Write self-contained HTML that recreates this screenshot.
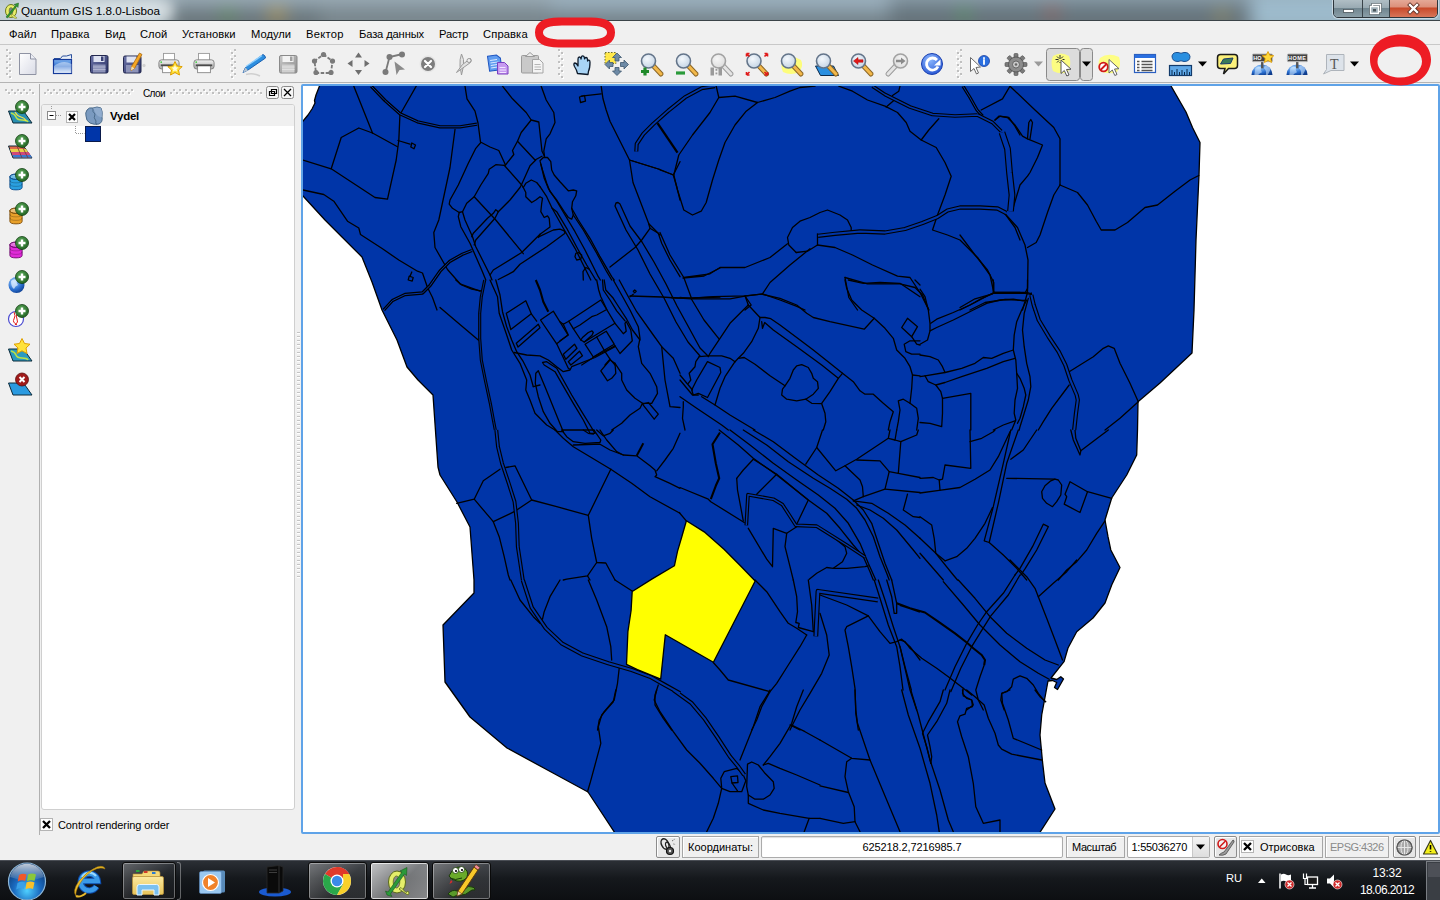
<!DOCTYPE html>
<html lang="ru">
<head>
<meta charset="utf-8">
<title>Quantum GIS 1.8.0-Lisboa</title>
<style>
*{box-sizing:border-box;margin:0;padding:0}
html,body{width:1440px;height:900px;overflow:hidden;background:#f0f0f0;font-family:"Liberation Sans",sans-serif;font-size:11px;color:#000}
.abs{position:absolute}
#titlebar{position:absolute;left:0;top:0;width:1440px;height:21px;background:linear-gradient(#8a9aa3,#74848d);border-bottom:1px solid #3b4348;overflow:hidden}
#title{position:absolute;left:21px;top:4px;font-size:11.700px;line-height:14px;color:#000;white-space:nowrap}
#menubar{position:absolute;left:0;top:21px;width:1440px;height:24px;background:#f0f0f0;border-bottom:1px solid #c8c8c8}
#menubar span{position:absolute;top:7px;font-size:11.200px;line-height:13px;white-space:nowrap}
#toolbar{position:absolute;left:0;top:45px;width:1440px;height:38px;background:#f0f0f0;border-bottom:1px solid #b4b4b4}
#lefttb{position:absolute;left:0;top:84px;width:40px;height:775px;background:#f0f0f0;border-right:1px solid #b0b0b0}
#layers{position:absolute;left:41px;top:104px;width:254px;height:706px;background:#fff;border:1px solid #cfcfcf;border-radius:3px}
#canvas{position:absolute;left:301px;top:84px;width:1139px;height:750px;background:#fff;border:2px solid #5fa3e8;border-radius:2px;overflow:hidden}
#statusbar{position:absolute;left:0;top:835px;width:1440px;height:25px;background:#f0f0f0}
.sbox{position:absolute;top:1px;height:22px;border:1px solid #a6a6a6;box-shadow:inset 1px 1px 0 #fff;background:#f0f0f0;font-size:11px;line-height:20px;white-space:nowrap}
#taskbar{position:absolute;left:0;top:860px;width:1440px;height:40px;background:linear-gradient(#2b2f35 0,#15181c 45%,#0d0f12 100%);border-top:1px solid #4a4e55;overflow:hidden}
.tbtn{position:absolute;top:1px;height:38px;border:1px solid #0a0a0a;border-radius:3px;box-shadow:inset 0 0 0 1px rgba(255,255,255,.35)}
</style>
</head>
<body>
<div id="titlebar">
  <div class="abs" style="left:-20px;top:-10px;width:1480px;height:44px;filter:blur(9px)">
    <div class="abs" style="left:0;top:0;width:215px;height:44px;background:#c3d0d6"></div>
    <div class="abs" style="left:190px;top:14px;width:150px;height:30px;background:#6b777d"></div>
    <div class="abs" style="left:190px;top:0;width:150px;height:16px;background:#9fb2bd"></div>
    <div class="abs" style="left:340px;top:10px;width:230px;height:34px;background:#7a878e"></div>
    <div class="abs" style="left:340px;top:0;width:230px;height:14px;background:#a3b6c1"></div>
    <div class="abs" style="left:570px;top:0;width:340px;height:22px;background:#9eb4c2"></div>
    <div class="abs" style="left:570px;top:20px;width:340px;height:24px;background:#74828a"></div>
    <div class="abs" style="left:910px;top:0;width:370px;height:15px;background:#8da3b0"></div>
    <div class="abs" style="left:910px;top:14px;width:370px;height:30px;background:#66737b"></div>
    <div class="abs" style="left:1270px;top:0;width:220px;height:44px;background:#9dbacb"></div>
    <div class="abs" style="left:243px;top:22px;width:10px;height:8px;background:#4f9a3a"></div>
    <div class="abs" style="left:290px;top:20px;width:14px;height:10px;background:#c89a3a"></div>
    <div class="abs" style="left:980px;top:20px;width:8px;height:10px;background:#4aa84a"></div>
    <div class="abs" style="left:1068px;top:18px;width:8px;height:10px;background:#b84a3a"></div>
    <div class="abs" style="left:1238px;top:22px;width:8px;height:8px;background:#c8a83a"></div>
  </div>
  <div class="abs" style="left:14px;top:2px;width:160px;height:17px;border-radius:8px;background:rgba(255,255,255,.35);filter:blur(5px)"></div>
  <svg class="abs" style="left:3px;top:2px" width="17" height="17" viewBox="0 0 17 17">
    <ellipse cx="8" cy="9" rx="5.5" ry="6.5" fill="#e9ee6a" stroke="#6d7a1e" stroke-width="1"/>
    <ellipse cx="8" cy="9" rx="2" ry="3.4" fill="#74848d" stroke="#6d7a1e" stroke-width=".6"/>
    <path d="M3 15 L13 3 L11 2.5 L15.5 1 L15 5.5 L14 4 L4.5 16 Z" fill="#2f9a2f" stroke="#1e5e1e" stroke-width=".5"/>
    <path d="M9 12 L14 16 L12 16.5 L8 13.5Z" fill="#e9ee6a" stroke="#6d7a1e" stroke-width=".5"/>
  </svg>
  <div id="title">Quantum GIS 1.8.0-Lisboa</div>
  <!-- window controls -->
  <div class="abs" style="left:1333px;top:-4px;width:105px;height:22px;border:1px solid #2d353b;border-radius:5px;overflow:hidden;box-shadow:0 0 0 1px rgba(255,255,255,.45)">
    <div class="abs" style="left:0;top:0;width:29px;height:21px;background:linear-gradient(#b9c6cc 0,#9aabb3 50%,#6f848e 52%,#8ea1aa 100%);border-right:1px solid #3a444a"></div>
    <div class="abs" style="left:29px;top:0;width:27px;height:21px;background:linear-gradient(#b9c6cc 0,#9aabb3 50%,#6f848e 52%,#8ea1aa 100%);border-right:1px solid #3a444a"></div>
    <div class="abs" style="left:56px;top:0;width:48px;height:21px;background:linear-gradient(#e8b4a4 0,#dc8f7a 48%,#c8492a 52%,#d97a5e 100%)"></div>
    <svg class="abs" style="left:0;top:0" width="104" height="21" viewBox="0 0 104 21">
      <rect x="9.5" y="12.5" width="10" height="3" fill="#fff" stroke="#4a555b" stroke-width=".8"/>
      <path d="M38.5 7.5h8v7h-8z M36.5 9.5h8v7h-8z" fill="none" stroke="#4a555b" stroke-width="2.6"/>
      <path d="M38.5 7.5h8v7h-8z" fill="none" stroke="#fff" stroke-width="1.4"/>
      <path d="M36.500 9.500h8v7h-8z" fill="#a0b0b8" stroke="#fff" stroke-width="1.4"/>
      <rect x="39" y="12" width="3" height="2.5" fill="#4a555b"/>
      <path d="M76 8l7 7M83 8l-7 7" stroke="#5a2a20" stroke-width="4" stroke-linecap="square"/>
      <path d="M76 8l7 7M83 8l-7 7" stroke="#fff" stroke-width="2.400" stroke-linecap="square"/>
    </svg>
  </div>
</div>
<div id="menubar">
  <span style="left:9px">Файл</span>
  <span style="left:51px;letter-spacing:.15px">Правка</span>
  <span style="left:105px">Вид</span>
  <span style="left:140px">Слой</span>
  <span style="left:182px;letter-spacing:.12px">Установки</span>
  <span style="left:251px">Модули</span>
  <span style="left:306px;letter-spacing:.25px">Вектор</span>
  <span style="left:359px;letter-spacing:-.15px">База данных</span>
  <span style="left:439px;letter-spacing:-.2px">Растр</span>
  <span style="left:483px;letter-spacing:.12px">Справка</span>
</div>
<div id="toolbar">
<svg class="abs" style="left:0;top:0" width="1440" height="38" viewBox="0 45 1440 38">
<defs>
  <linearGradient id="gPage" x1="0" y1="0" x2="1" y2="1"><stop offset="0" stop-color="#ffffff"/><stop offset="1" stop-color="#d9dbe6"/></linearGradient>
  <linearGradient id="gFold" x1="0" y1="0" x2="0" y2="1"><stop offset="0" stop-color="#7fb2ee"/><stop offset=".5" stop-color="#2f6fd0"/><stop offset="1" stop-color="#d6e6fa"/></linearGradient>
  <linearGradient id="gFlop" x1="0" y1="0" x2="1" y2="1"><stop offset="0" stop-color="#6c74a8"/><stop offset="1" stop-color="#2b3266"/></linearGradient>
  <linearGradient id="gFlopG" x1="0" y1="0" x2="1" y2="1"><stop offset="0" stop-color="#c9c9c9"/><stop offset="1" stop-color="#8e8e8e"/></linearGradient>
  <linearGradient id="gPrn" x1="0" y1="0" x2="0" y2="1"><stop offset="0" stop-color="#f4f4f4"/><stop offset="1" stop-color="#a9a9a9"/></linearGradient>
  <radialGradient id="gLens" cx=".4" cy=".35" r=".7"><stop offset="0" stop-color="#f4f8fc"/><stop offset="1" stop-color="#c3d3e4"/></radialGradient>
  <radialGradient id="gLensG" cx=".4" cy=".35" r=".7"><stop offset="0" stop-color="#f6f6f6"/><stop offset="1" stop-color="#dcdcdc"/></radialGradient>
  <radialGradient id="gRef" cx=".4" cy=".3" r=".8"><stop offset="0" stop-color="#8db8ff"/><stop offset="1" stop-color="#1f4fd0"/></radialGradient>
  <radialGradient id="gGlobe" cx=".35" cy=".3" r=".8"><stop offset="0" stop-color="#9fd0ff"/><stop offset=".6" stop-color="#2a6fd0"/><stop offset="1" stop-color="#0d3a8a"/></radialGradient>
  <pattern id="hdl" width="6" height="6" patternUnits="userSpaceOnUse" x="6" y="49"><rect x="1" y="1" width="2" height="2" fill="#fff"/><rect x="0" y="0" width="2" height="2" fill="#c0c0c0"/><rect x="4" y="4" width="2" height="2" fill="#fff"/><rect x="3" y="3" width="2" height="2" fill="#c0c0c0"/></pattern>
  <symbol id="mag" viewBox="0 0 24 24" overflow="visible">
    <path d="M13.5 13.500L21 21.500" stroke="#8a6424" stroke-width="5" stroke-linecap="round"/>
    <path d="M13.500 13.500L21 21.500" stroke="#f2b84a" stroke-width="3" stroke-linecap="round"/>
    <circle cx="8.5" cy="8.500" r="7" fill="url(#gLens)" stroke="#64758a" stroke-width="1.6"/>
  </symbol>
  <symbol id="magG" viewBox="0 0 24 24" overflow="visible">
    <path d="M13.500 13.500L21 21.500" stroke="#9a9a9a" stroke-width="5" stroke-linecap="round"/>
    <path d="M13.500 13.500L21 21.500" stroke="#e4e4e4" stroke-width="3" stroke-linecap="round"/>
    <circle cx="8.500" cy="8.500" r="7" fill="url(#gLensG)" stroke="#a2a2a2" stroke-width="1.600"/>
  </symbol>
  <symbol id="prn" viewBox="0 0 24 24" overflow="visible">
    <rect x="6" y="1" width="12" height="9" fill="#fff" stroke="#9a9a9a" stroke-width="1"/>
    <rect x="1" y="8" width="22" height="10" rx="3" fill="url(#gPrn)" stroke="#7d7d7d" stroke-width="1"/>
    <rect x="5" y="14" width="14" height="8" fill="#fff" stroke="#8a8a8a" stroke-width="1"/>
    <rect x="3" y="13" width="18" height="2" fill="#4a4a4a"/>
    <circle cx="3.500" cy="10.500" r=".9" fill="#3c3"/>
  </symbol>
  <symbol id="globe" viewBox="0 0 24 24" overflow="visible">
    <path d="M1 23 A11 11 0 0 1 23 23 Z" fill="url(#gGlobe)"/>
    <path d="M5 16 q3 -3 6 -1 q-1 3 1 5 q-3 1 -4 3 l-4 0 z M15 13 q4 0 6 4 l-3 6 l-2 0 q1 -5 -2 -7 z" fill="#d9ecff" opacity=".55"/>
    <rect x="11" y="8" width="2.500" height="8" fill="#555"/>
    <rect x="2" y="1" width="21" height="8" rx="1" fill="#444" stroke="#bdbdbd" stroke-width="1"/>
  </symbol>
</defs>
<!-- handles -->
<rect x="6" y="49" width="6" height="30" fill="url(#hdl)"/>
<rect x="230" y="49" width="6" height="30" fill="url(#hdl)"/>
<rect x="558" y="49" width="6" height="30" fill="url(#hdl)"/>
<rect x="956" y="49" width="6" height="30" fill="url(#hdl)"/>
<!-- 1 new -->
<path d="M19.500 53.500h11l5.500 5.500v15.500h-16.500z" fill="url(#gPage)" stroke="#8f93a3" stroke-width="1"/>
<path d="M30.500 53.500v5.500h5.500" fill="#eceef5" stroke="#8f93a3" stroke-width="1"/>
<!-- 2 open -->
<path d="M54 58.500l6.500 0 2 -2.500 4 0 5 -1.500 0 4" fill="#e8f0fb" stroke="#2a4f9a" stroke-width="1"/>
<rect x="53.500" y="59.500" width="18" height="14" fill="url(#gFold)" stroke="#153a9a" stroke-width="1.200"/>
<path d="M54 66 q9 -7 17.500 -2 l0 9 l-17.500 0z" fill="#ffffff" opacity=".45"/>
<!-- 3 save -->
<rect x="90.500" y="55.500" width="17.500" height="17.500" rx="1.500" fill="url(#gFlop)" stroke="#23284f" stroke-width="1"/>
<rect x="93.500" y="56" width="11" height="6" fill="#dfe3f2"/><rect x="101" y="56.500" width="2.500" height="4.500" fill="#3a4176"/>
<rect x="93" y="64.500" width="12.500" height="8" fill="#8d93b8"/><path d="M93 67h12.500M93 69.500h12.500" stroke="#b9bdd6" stroke-width=".8"/>
<!-- 4 save as -->
<rect x="123.500" y="56" width="17.500" height="17" rx="1.500" fill="url(#gFlop)" stroke="#23284f" stroke-width="1"/>
<rect x="126.500" y="56.500" width="10" height="6" fill="#dfe3f2"/>
<rect x="126" y="65" width="12.500" height="7.500" fill="#8d93b8"/>
<path d="M139.500 53l2.500 1.500 -7.500 14 -3.500 2 .5 -4z" fill="#f6a623" stroke="#a86a10" stroke-width=".8"/>
<path d="M131.500 66.500l-.5 4 3.500 -2z" fill="#f3dfb8"/>
<ellipse cx="144" cy="65.500" rx="1.600" ry="1.800" fill="#d2d2d2"/>
<!-- 5 composer new -->
<use href="#prn" x="158" y="52.500" width="22" height="22"/>
<path d="M175 61.500l2.200 4.500 5 .6 -3.700 3.400 1 5 -4.500 -2.500 -4.500 2.500 1 -5 -3.700 -3.400 5 -.6z" fill="#ffe23a" stroke="#e0a000" stroke-width="1"/>
<path d="M175 65l1 2.300 2.400 .3 -1.800 1.600 .5 2.400 -2.100 -1.200 -2.100 1.200 .5 -2.400 -1.800 -1.600 2.400 -.3z" fill="#fffbe0"/>
<!-- 6 print -->
<use href="#prn" x="193" y="52.500" width="22" height="22"/>
<!-- 7 pencil -->
<path d="M246 74.500 q7 -2 14 1.500" stroke="#cfcfcf" stroke-width="1.500" fill="none"/>
<path d="M263 54.500 q2.500 1 2.500 3.500 l-17.500 12 -5 2.500 2.500 -5z" fill="#2d8fe0" stroke="#1a5fb0" stroke-width="1"/>
<path d="M262 55.500l-16 11" stroke="#8fd0ff" stroke-width="1.500"/>
<path d="M243 72.500l2.500 -5 2.500 3z" fill="#b8c4d0"/>
<!-- 8 save edits (grey) -->
<rect x="279.500" y="55.500" width="17.500" height="17.500" rx="1.500" fill="url(#gFlopG)" stroke="#8a8a8a" stroke-width="1"/>
<rect x="282.500" y="56" width="11" height="6" fill="#f3f3f3"/><rect x="290" y="56.500" width="2.500" height="4.500" fill="#a0a0a0"/>
<rect x="282" y="64.500" width="12.500" height="8" fill="#cfcfcf"/><path d="M282 67h12.500M282 69.500h12.500" stroke="#e6e6e6" stroke-width=".8"/>
<!-- 9 capture polygon -->
<g stroke="#7a7a7a" stroke-width="1.800" fill="none"><path d="M323.500 54.500l9 6.500 -1.500 12h-15l-1.500 -12z" stroke-dasharray="3.500 1.500"/></g>
<g fill="#7a7a7a"><circle cx="323.500" cy="54.500" r="2.600"/><circle cx="332.500" cy="61" r="2.600"/><circle cx="331" cy="72.500" r="2.600"/><circle cx="316" cy="72.500" r="2.600"/><circle cx="314.500" cy="61" r="2.600"/></g>
<!-- 10 move -->
<g fill="#6e6e6e"><path d="M358.500 52.500l3.500 5h-7z"/><path d="M358.500 75l3.500 -5h-7z"/><path d="M347.500 63.500l5 -3.500v7z"/><path d="M369.500 63.500l-5 -3.500v7z"/></g>
<!-- 11 node tool -->
<g stroke="#7a7a7a" stroke-width="1.800" fill="none"><path d="M385.500 72.500l4 -15.500 13 -3"/></g>
<g fill="#7a7a7a"><circle cx="385.500" cy="72" r="3"/><circle cx="389.500" cy="57" r="3"/><circle cx="402" cy="54.500" r="3"/></g>
<path d="M394.500 61.500l10.500 8 -5.500 .5 -3 5z" fill="#8a8a8a"/>
<!-- 12 delete -->
<circle cx="428" cy="64" r="8.500" fill="#e6e6e6"/><circle cx="428" cy="64" r="7" fill="#7d7d7d"/>
<path d="M425 61l6 6M431 61l-6 6" stroke="#fff" stroke-width="2.200" stroke-linecap="round"/>
<!-- 13 scissors -->
<g fill="#e2e2e2" stroke="#9a9a9a" stroke-width="1"><path d="M461.500 54 q3 5 2 12 l-2 9 -1.500 -9 q-.5 -7 1.500 -12z"/><path d="M470.500 58.500 q1.500 2 0 4 l-14 10 6 -8z"/><circle cx="469" cy="60.500" r="2" fill="#f0f0f0"/></g>
<!-- 14 copy -->
<path d="M488.500 55.500h9l3.500 3.500v11.500h-12.500z" fill="#5f9cf0" stroke="#1f55c0" stroke-width="1" transform="rotate(-8 494 63)"/>
<path d="M490.500 60h7M490.500 62.500h8M490.500 65h8M490.500 67.500h8" stroke="#dcebff" stroke-width="1" transform="rotate(-8 494 63)"/>
<path d="M497.500 62.500h7l3.500 3.500v8h-10.500z" fill="#c79af0" stroke="#7a3fc0" stroke-width="1"/>
<path d="M499.500 67.500h6M499.500 70h6.500M499.500 72.500h6.500" stroke="#f1e4ff" stroke-width="1"/>
<!-- 15 paste -->
<rect x="521.500" y="55.500" width="17" height="17.500" rx="1" fill="#c9c9c9" stroke="#9b9b9b" stroke-width="1"/>
<path d="M525.500 56.500l4.500 -4 4.500 4z" fill="#ededed" stroke="#9b9b9b" stroke-width="1"/>
<path d="M532.500 59.500h7l3.500 3.500v10h-10.500z" fill="#f4f4f4" stroke="#a5a5a5" stroke-width="1"/>
<path d="M534.500 64.500h6M534.500 67h6.500M534.500 69.500h6.500" stroke="#b5b5b5" stroke-width="1"/>

<!-- 17 pan hand -->
<path d="M577.500 73.500 q-1 -4 -3 -7 q-1.500 -3 .5 -3.500 q1.500 0 3 3 l0 -7 q0 -2 1.500 -2 q1.300 0 1.500 2 l.3 -1.500 q.2 -1.800 1.600 -1.700 q1.400 .1 1.500 2 l.2 1 q.3 -1.500 1.600 -1.300 q1.300 .2 1.300 2 l.1 1.500 q.4 -1 1.400 -.8 q1.100 .3 1 2 q0 6 -1.500 9 l-.5 3.300z" fill="#a9d4f5" stroke="#0d1a2a" stroke-width="1.300" stroke-linejoin="round"/>
<!-- 18 pan to selection -->
<rect x="605" y="52.500" width="11" height="11" fill="#ffe84a" stroke="#6a6a2a" stroke-width="1" stroke-dasharray="1.500 1.500"/>
<g fill="#6d8aa6" stroke="#3f586f" stroke-width=".8"><path d="M617 53l4.500 4.500h-2.500v3.500h-4v-3.500h-2.500z"/><path d="M617 75.500l4.500 -4.500h-2.500v-3.500h-4v3.500h-2.500z"/><path d="M605 64.500l4.500 -4.500v2.500h3.500v4h-3.500v2.500z"/><path d="M628.500 64.500l-4.500 -4.500v2.500h-3.500v4h3.500v2.500z"/></g>
<!-- 19 zoom in -->
<use href="#mag" x="640" y="52.500" width="24" height="24"/>
<path d="M641 71.500h8M645 67.500v8" stroke="#1f8a2a" stroke-width="3.200"/>
<!-- 20 zoom out -->
<use href="#mag" x="675" y="52.500" width="24" height="24"/>
<path d="M676 73h9" stroke="#2a9a3a" stroke-width="3.200"/>
<!-- 21 zoom actual (grey) -->
<use href="#magG" x="710" y="52.500" width="24" height="24"/>
<g fill="#9a9a9a"><rect x="710.500" y="67.500" width="3.500" height="8"/><rect x="718.500" y="67.500" width="3.500" height="8"/><rect x="715.500" y="69" width="1.800" height="1.800"/><rect x="715.500" y="72.500" width="1.800" height="1.800"/></g>
<!-- 22 zoom full -->
<use href="#mag" x="745.500" y="52.500" width="24" height="24"/>
<g stroke="#e01a1a" stroke-width="1.600" fill="#e01a1a"><path d="M749.500 56.500l-3 -3M746.500 53.500h3M746.500 53.500v3"/><path d="M764.500 56.500l3 -3M767.500 53.500h-3M767.500 53.500v3"/><path d="M749.500 72l-3 3M746.500 75h3M746.500 75v-3"/><path d="M764.500 72l3 3M767.500 75h-3M767.500 75v-3"/></g>
<!-- 23 zoom to selection -->
<path d="M783 60 q8 -6 18 0 q3 6 -2 12 q-8 4 -16 0 q-3 -6 0 -12z" fill="#ffff66" opacity=".85"/>
<use href="#mag" x="780" y="52.500" width="24" height="24"/>
<!-- 24 zoom to layer -->
<path d="M815.500 66h18l5 9.500h-18z" fill="#2a8fe0" stroke="#0d2a4a" stroke-width="1"/>
<use href="#mag" x="815" y="52.500" width="24" height="24"/>
<!-- 25 zoom last -->
<use href="#mag" x="850" y="52.500" width="24" height="24"/>
<path d="M853.500 61l4.500 -3.500v2.300h5v2.400h-5v2.300z" fill="#e01a1a" stroke="#a00" stroke-width=".5"/>
<!-- 26 zoom next (grey) -->
<g transform="translate(1794 0) scale(-1 1)"><use href="#magG" x="885" y="52.500" width="24" height="24"/></g>
<path d="M905.500 61l-4.500 -3.500v2.300h-5v2.400h5v2.300z" fill="#8a8a8a"/>
<!-- 27 refresh -->
<circle cx="932" cy="64" r="10.500" fill="url(#gRef)" stroke="#1a3fb0" stroke-width="1"/>
<path d="M937 60 a6 6 0 1 0 1 6.500" fill="none" stroke="#fff" stroke-width="2.800"/>
<path d="M934 65.500h6.500v-6z" fill="#fff"/>
<!-- 28 identify -->
<path d="M970.500 57.500l0 14 3.500 -3 2.500 5.500 2 -1 -2.500 -5.500 4.500 -.5z" fill="#fff" stroke="#6a6a6a" stroke-width="1"/>
<circle cx="984" cy="61" r="5.500" fill="#2a6fe0" stroke="#1a3fa0" stroke-width=".8"/>
<path d="M984 58v.2M984 60v4" stroke="#fff" stroke-width="1.800" stroke-linecap="round"/>
<!-- 29 gear -->
<g transform="translate(1016 64.500)"><g fill="#7a7a7a" stroke="#4f4f4f" stroke-width=".6"><rect x="-2" y="-11" width="4" height="22" rx="1"/><rect x="-2" y="-11" width="4" height="22" rx="1" transform="rotate(45)"/><rect x="-2" y="-11" width="4" height="22" rx="1" transform="rotate(90)"/><rect x="-2" y="-11" width="4" height="22" rx="1" transform="rotate(135)"/></g><circle r="7.500" fill="#8c8c8c" stroke="#4f4f4f" stroke-width=".8"/><circle r="3.500" fill="#c9c9c9" stroke="#555" stroke-width=".8"/><circle r="1.300" fill="#666"/></g>
<path d="M1034 61.500h9l-4.500 5z" fill="#9a9a9a"/>
<!-- 30 select (pressed) -->
<rect x="1046.500" y="48.500" width="33" height="32" rx="3" fill="#dcdcdc" stroke="#8a8a8a" stroke-width="1"/>
<rect x="1080.500" y="48.500" width="12" height="32" rx="3" fill="#dcdcdc" stroke="#8a8a8a" stroke-width="1"/>
<path d="M1082 61.500h9l-4.500 5z" fill="#000"/>
<path d="M1053 56 q8 -5 16 0 q3 8 -1 16 q-8 3 -15 -1 q-3 -8 0 -15z" fill="#ffff78" opacity=".9"/>
<g stroke="#2a2a2a" stroke-width="1"><path d="M1060 55v4M1060 63v-1M1055.500 59.500h3M1064.500 59.500h-2M1057 56.500l2 2M1063 56.500l-2 2M1057 62.500l2 -2"/></g>
<path d="M1061 60l0 13.500 3.300 -3 2.500 5.500 2.200 -1 -2.500 -5.500 4.500 -.3z" fill="#fff" stroke="#555" stroke-width="1"/>
<!-- 31 deselect -->
<path d="M1100 58 q8 -6 19 -1 q3 8 -2 15 q-9 3 -17 -1 q-3 -7 0 -13z" fill="#ffff78" opacity=".9"/>
<circle cx="1103.500" cy="67" r="4.300" fill="#fff" stroke="#d01a1a" stroke-width="1.800"/><path d="M1100.500 70l6 -6" stroke="#d01a1a" stroke-width="1.800"/>
<path d="M1109 59.500l0 13.500 3.300 -3 2.500 5.500 2.200 -1 -2.500 -5.500 4.500 -.3z" fill="#fff" stroke="#666" stroke-width="1"/>
<!-- 32 attribute table -->
<rect x="1134.500" y="54.500" width="21" height="18" fill="#fff" stroke="#2a5fc0" stroke-width="1.200"/>
<rect x="1135" y="55" width="20" height="3" fill="#2a6fe0"/>
<g stroke="#555" stroke-width="1.300"><path d="M1137 61.500h2.500M1141.500 61.500h11M1137 64.500h2.500M1141.500 64.500h11M1137 67.500h2.500M1141.500 67.500h11M1137 70.500h2.500M1141.500 70.500h11"/></g>
<!-- 33 measure -->
<path d="M1172 56 q1 -4 6 -3.500 q3 1.500 6 0 q5 -.5 6 4 q0 5 -6 5 q-3 -1.500 -6 0 q-6 0 -6 -5.500z" fill="#2a8fe0" stroke="#1a4f90" stroke-width="1"/>
<rect x="1169.500" y="65.500" width="22" height="10" fill="#5fa8e8" stroke="#123a6a" stroke-width="1.200"/>
<path d="M1172 75v-5M1174.500 75v-3M1177 75v-6M1179.500 75v-3M1182 75v-5M1184.500 75v-3M1187 75v-6M1189.500 75v-3" stroke="#0a2a4a" stroke-width="1"/>
<path d="M1198 61.500h9l-4.500 5z" fill="#000"/>
<!-- 34 map tips -->
<path d="M1220.500 54.500h14q3 0 3 3v8q0 3 -3 3h-6l-5 5.500 1.500 -5.500h-4.500q-3 0 -3 -3v-8q0 -3 3 -3z" fill="#fbf07a" stroke="#1a1a1a" stroke-width="1.500"/>
<path d="M1223.500 59l9.500 -1 -2.500 5.500 -10 .5z" fill="#3a7a5a" stroke="#1a3a6a" stroke-width="1"/>
<!-- 35 new bookmark -->
<use href="#globe" x="1250" y="53" width="24" height="23"/>
<path d="M1268 51.500l1.800 3.700 4 .5 -3 2.800 .8 4 -3.600 -2 -3.600 2 .8 -4 -3 -2.800 4 -.5z" fill="#ffd83a" stroke="#e09a00" stroke-width=".8"/>
<text x="1253.200" y="60" font-family="Liberation Sans" font-size="5.500" font-weight="bold" fill="#fff">HO</text>
<!-- 36 show bookmarks -->
<use href="#globe" x="1285" y="53" width="24" height="23"/>
<text x="1288" y="60" font-family="Liberation Sans" font-size="5.500" font-weight="bold" fill="#fff" textLength="18">HOME</text>
<!-- 37 text annotation -->
<path d="M1326.500 54.500h17.500v16h-13l-7.500 3.500 3 -4.500z" fill="#dde3ea" stroke="#aeb4bb" stroke-width="1"/>
<text x="1330" y="68.500" font-family="Liberation Serif" font-size="14" fill="#555">T</text>
<path d="M1350 61.500h9l-4.500 5z" fill="#000"/>

</svg>
</div>
<div id="lefttb">
<svg class="abs" style="left:0;top:0" width="40" height="775" viewBox="0 84 40 775">
<defs>
  <pattern id="hdlh" width="6" height="6" patternUnits="userSpaceOnUse" x="5" y="89"><rect x="1" y="1" width="2" height="2" fill="#fff"/><rect x="0" y="0" width="2" height="2" fill="#c0c0c0"/><rect x="4" y="4" width="2" height="2" fill="#fff"/><rect x="3" y="3" width="2" height="2" fill="#c0c0c0"/></pattern>
  <radialGradient id="gPlus" cx=".4" cy=".35" r=".8"><stop offset="0" stop-color="#5aa85a"/><stop offset="1" stop-color="#1a5a1a"/></radialGradient>
  <symbol id="plus" viewBox="0 0 14 14" overflow="visible"><circle cx="7" cy="7" r="6.500" fill="url(#gPlus)" stroke="#0f3f0f" stroke-width=".8"/><path d="M3.500 7h7M7 3.500v7" stroke="#fff" stroke-width="2.400"/></symbol>
  <symbol id="cyl" viewBox="0 0 16 20" overflow="visible"><path d="M1 4v12q0 3 7 3t7 -3v-12z"/><ellipse cx="8" cy="4" rx="7" ry="3" fill-opacity=".75" fill="#fff"/><ellipse cx="8" cy="4" rx="7" ry="3" fill-opacity=".55"/><path d="M1 8q0 3 7 3t7 -3M1 12q0 3 7 3t7 -3" fill="none" stroke="#000" stroke-opacity=".25" stroke-width="1"/></symbol>
</defs>
<rect x="5" y="89" width="30" height="6" fill="url(#hdlh)"/>
<!-- 1 add vector -->
<path d="M8.500 111h15l8.500 12h-19z" fill="#2a8fb0" stroke="#0d2a3a" stroke-width="1"/>
<path d="M11 113q4 1 5 4t6 3 6 2" fill="none" stroke="#b8e04a" stroke-width="1.600"/><path d="M15 112q2 4 6 5t5 4" fill="none" stroke="#f0e04a" stroke-width="1.200"/>
<use href="#plus" x="15" y="100" width="14" height="14"/>
<!-- 2 add raster -->
<path d="M8.500 146h15l8.500 12h-19z" fill="#e06a4a" stroke="#0d2a3a" stroke-width="1"/>
<path d="M10 149h16l2 3h-17z" fill="#e8d04a"/><path d="M11.500 152h17l2 3h-18z" fill="#d04a7a"/><path d="M12.500 155h18l1.500 2.500h-18.500z" fill="#3a7ad0"/><path d="M17 146l5 12M22 146l6 12" stroke="#6a3a3a" stroke-width=".8"/>
<use href="#plus" x="15" y="134" width="14" height="14"/>
<!-- 3 postgis -->
<use href="#cyl" x="9" y="172" width="14" height="20" fill="#2aa0e0" stroke="#0d4a8a" stroke-width="1"/>
<use href="#plus" x="15" y="168" width="14" height="14"/>
<!-- 4 spatialite -->
<use href="#cyl" x="9" y="206" width="14" height="20" fill="#e8a02a" stroke="#7a4a0a" stroke-width="1"/>
<use href="#plus" x="15" y="202" width="14" height="14"/>
<!-- 5 mssql -->
<use href="#cyl" x="9" y="240" width="14" height="20" fill="#e02ad8" stroke="#6a0a6a" stroke-width="1"/>
<use href="#plus" x="15" y="236" width="14" height="14"/>
<!-- 6 wms -->
<circle cx="16.500" cy="285" r="8" fill="url(#gGlobe)"/><path d="M11 281q3 -3 6 -1q-1 3 1 5q-3 1 -4 4q-3 -2 -3 -8z" fill="#e8f4ff" opacity=".7"/>
<use href="#plus" x="15" y="270" width="14" height="14"/>
<!-- 7 wfs -->
<circle cx="16" cy="319" r="7.500" fill="#fff" stroke="#4a4ad0" stroke-width="1.200"/><path d="M14 312q2 4 0 7t3 6M18 313q-3 3 -1 6t-2 6" fill="none" stroke="#e01a1a" stroke-width="1"/>
<use href="#plus" x="15" y="304" width="14" height="14"/>
<!-- 8 new shapefile -->
<path d="M8.500 349h15l8.500 12h-19z" fill="#2a9ac0" stroke="#0d2a3a" stroke-width="1"/>
<path d="M11 351q4 1 5 4t6 3 6 2" fill="none" stroke="#b8e04a" stroke-width="1.600"/>
<path d="M22 338.500l2.500 5 5.500 .7 -4 3.800 1 5.500 -5 -2.700 -5 2.700 1 -5.500 -4 -3.800 5.500 -.7z" fill="#ffe23a" stroke="#e0a000" stroke-width="1"/>
<!-- 9 remove layer -->
<path d="M8.500 383h15l8.500 12h-19z" fill="#2a9ae0" stroke="#0d2a3a" stroke-width="1"/>
<circle cx="22" cy="379.500" r="6.500" fill="#a01a1a" stroke="#5a0a0a" stroke-width=".8"/><path d="M19.500 377l5 5M24.500 377l-5 5" stroke="#fff" stroke-width="2"/>
</svg>
</div>
<!-- layers dock title -->
<svg class="abs" style="left:40px;top:84px" width="260" height="20" viewBox="40 84 260 20">
  <rect x="44" y="89" width="90" height="6" fill="url(#hdlh)"/>
  <rect x="170" y="89" width="92" height="6" fill="url(#hdlh)"/>
  <rect x="266.500" y="86.500" width="12" height="12" rx="2" fill="#f6f6f6" stroke="#8a8a8a"/>
  <path d="M271.500 89.500h5v4h-5z M269.500 91.500h5v4h-5z" fill="#f6f6f6" stroke="#000" stroke-width="1.200"/>
  <rect x="281.500" y="86.500" width="12" height="12" rx="2" fill="#f6f6f6" stroke="#8a8a8a"/>
  <path d="M284 89l7 7M291 89l-7 7" stroke="#000" stroke-width="1.300"/>
</svg>
<div class="abs" style="left:143px;top:87px;font-size:10px;line-height:13px;letter-spacing:-.6px">Слои</div>
<div id="layers">
  <div class="abs" style="left:0;top:0;width:252px;height:21px;background:#f0f0f0;border-radius:2px 2px 0 0"></div>
  <svg class="abs" style="left:0;top:0" width="252" height="40" viewBox="42 105 252 40">
    <path d="M51.500 106v4M56 115.500h6M75.500 126v7.500h9" stroke="#9a9a9a" stroke-width="1" stroke-dasharray="1 1" fill="none"/>
    <rect x="47.500" y="111.500" width="8" height="8" fill="#fff" stroke="#8a8a8a"/><path d="M49.500 115.500h4" stroke="#000"/>
    <rect x="66.500" y="111.500" width="11" height="11" fill="#fff" stroke="#b4b4b4"/>
    <path d="M69 114l6 6M75 114l-6 6" stroke="#000" stroke-width="2.200"/>
    <path d="M87 110q2 -3 6 -2q4 -2 8 0q2 4 1 9q1 5 -3 7q-5 1 -9 -1q-4 -2 -4 -7q-1 -3 1 -6z" fill="#7a9ac0" stroke="#4a6a8a" stroke-width="1"/>
    <path d="M93 108q-1 4 2 6q-2 4 1 7q-1 2 1 4" fill="none" stroke="#4a6a8a" stroke-width="1"/><path d="M93 108q4 -1 8 0q2 4 1 9q-3 1 -6 -3" fill="#9ab4d4" opacity=".7"/>
    <rect x="85.500" y="126.500" width="15" height="15" fill="#0035a8" stroke="#0a1a4a" stroke-width="1"/>
  </svg>
  <div class="abs" style="left:68px;top:5px;font-size:11.500px;line-height:13px;font-weight:bold;letter-spacing:-.25px">Vydel</div>
</div>
<!-- control rendering order -->
<svg class="abs" style="left:40px;top:818px" width="14" height="14" viewBox="0 0 14 14"><rect x=".5" y=".5" width="12" height="12" fill="#fff" stroke="#b4b4b4"/><path d="M3 3l7 7M10 3l-7 7" stroke="#000" stroke-width="2.300"/></svg>
<div class="abs" style="left:58px;top:819px;font-size:11px;line-height:13px;letter-spacing:-.1px">Control rendering order</div>
<!-- splitter dots -->
<div class="abs" style="left:297px;top:330px;width:3px;height:250px;background:repeating-linear-gradient(#f0f0f0 0,#f0f0f0 2px,#c4c4c4 2px,#c4c4c4 3px,#fff 3px,#fff 4px)"></div>
<div id="canvas">
<svg class="abs" style="left:-303px;top:-86px" width="1440" height="900" viewBox="0 0 1440 900">
<path d="M321.5 80 L1167.5 80 L1171 86 L1186 112 L1192.5 127.5 L1200 142.5 L1199 175 L1196 240 L1194 310 L1192 353 L1160 383 L1138 401.7 L1137.5 430 L1136.7 455 L1126.7 475 L1111.7 498 L1105 520 L1108 536.7 L1110.8 550 L1120 567.5 L1111.7 585 L1105 603 L1093 618 L1076.7 631.7 L1068 648 L1064 661.7 L1051 678 L1056.7 679.5 L1060.8 676.7 L1063.5 679 L1057.5 689.5 L1054.5 687.5 L1056.7 682.5 L1052.5 680.5 L1048 681 L1045.8 693 L1044.5 700 L1041.7 715 L1040 735 L1042.5 761.7 L1045 783 L1055 809 L1035 840 L619.6 840 L588 792 L553 773 L507 748 L470 717 L445 682 L443 625 L474 593 L474 580 L470 527 L457 502 L440 475 L438 467 L433 395 L418 380 L407 367 L397 340 L382 310 L372 282 L362 257 L342 237 L325 220 L296 188.4 L296 134 L303 121 L308 115 L312 109 L315 103 L314.5 100.5 L316 95 L319.5 86 Z" fill="#0035a8" stroke="#000" stroke-width="1.3" stroke-linejoin="round"/>
<g fill="none" stroke="#000" stroke-width="1.3" stroke-linejoin="round" stroke-linecap="round">
<path d="M353.8 86.2 L372.5 133.0"/>
<path d="M331.2 168.8 L341.2 137.5 L358.8 128.0 L372.5 133.0"/>
<path d="M303.0 160.0 L331.2 168.8 L375.0 197.5 L387.5 199.2 L396.2 160.0 L398.8 140.5 L400.0 113.0"/>
<path d="M398.0 140.5 L410.0 144.2"/>
<path d="M411.8 143.0 L415.5 145.0 L414.0 148.8 L410.8 147.0 Z"/>
<path d="M416.2 86.2 L401.2 112.5"/>
<path d="M303.0 190.0 L323.8 194.5 L333.8 201.2 L347.5 221.2 L358.8 228.0 L360.5 234.5 L382.5 248.8 L398.8 260.0 L417.5 271.2 L422.5 273.0 L427.5 287.5 L432.5 297.5 L437.0 310.0"/>
<path d="M411.8 272.0 L410.0 276.2"/>
<path d="M409.2 276.2 L413.2 277.5 L412.2 281.2 L408.2 280.0 Z"/>
<path d="M455.0 129.5 L450.0 167.5 L438.8 220.0 L433.8 232.5 L435.0 247.5 L447.5 269.5 L460.0 283.8 L480.0 291.2"/>
<path d="M465.0 86.2 L467.0 98.8 L475.0 111.2 L478.0 123.0 L480.5 142.0 L490.0 147.0 L498.8 150.5 L505.5 165.0"/>
<path d="M502.5 86.2 L512.5 98.8 L526.2 112.5 L531.2 120.0 L538.8 122.0 L542.0 151.2 L544.5 156.2"/>
<path d="M541.2 86.2 L546.2 100.0 L553.8 112.5 L555.0 122.5 L550.0 133.8 L546.2 138.8 L543.8 151.2 L544.5 156.2"/>
<path d="M531.2 120.0 L521.2 132.5 L517.5 141.2 L535.0 160.0 L542.0 156.2"/>
<path d="M517.5 141.2 L512.5 150.5 L513.8 154.5 L505.5 165.0"/>
<path d="M601.2 86.2 L603.0 98.8 L606.2 110.0 L610.0 121.2 L629.5 160.0 L633.0 182.5 L648.8 223.8 L660.0 235.0"/>
<path d="M629.5 160.0 L660.0 169.5"/>
<path d="M581.2 96.2 L601.2 93.8"/>
<path d="M579.5 97.0 L584.5 95.5 L585.5 101.2 L580.5 102.5 Z"/>
<path d="M372.5 133.0 L397.5 146.8"/>
<path d="M480.8 142.5 L475.8 148.3 L468.3 163.3 L458.3 185.0 L450.0 200.0 L449.2 204.2 L452.5 208.3 L459.2 212.5 L462.5 211.7 L466.7 203.3 L474.2 196.7 L480.8 185.0 L488.3 173.3 L489.2 169.2 L495.8 164.7 L504.2 165.3"/>
<path d="M504.2 165.3 L521.7 185.0 L523.3 187.5"/>
<path d="M535.8 160.0 L530.0 165.8 L521.7 184.2 L520.0 187.5 L510.0 200.0 L498.3 211.7 L495.8 209.7 L493.3 213.3 L487.5 218.3 L473.3 233.3 L471.7 236.7"/>
<path d="M498.3 211.7 L495.0 218.3 L475.8 240.0 L474.2 245.0"/>
<path d="M474.2 196.7 L495.8 220.0 L521.7 251.7 L523.3 253.7"/>
<path d="M459.2 212.5 L458.3 216.7 L460.8 226.7 L470.0 243.3 L481.7 270.0 L485.8 280.0"/>
<path d="M462.5 211.7 L465.0 220.0 L472.5 236.7 L475.8 246.7 L490.0 275.0 L492.0 280.0"/>
<path d="M523.3 187.5 L525.8 183.3 L531.3 180.0 L536.7 182.5 L540.0 186.7"/>
<path d="M523.3 187.5 L525.8 192.5 L525.8 196.7 L531.7 202.5 L535.8 200.0 L540.0 196.7 L542.5 198.3 L541.7 203.3 L540.8 211.7 L544.2 217.5 L547.5 215.8 L549.2 218.3 L550.0 227.0 L540.0 234.2 L538.3 237.5"/>
<path d="M540.0 234.2 L521.7 252.5 L493.3 270.0 L490.0 275.0"/>
<path d="M539.2 236.7 L553.3 230.0 L560.0 229.2 L564.2 230.8 L565.0 233.3 L546.7 246.7 L520.0 264.2 L513.3 271.7 L498.3 279.5"/>
<path d="M540.0 160.8 L543.3 157.5 L547.5 157.5 L550.8 161.7 L551.7 170.0 L554.2 175.0 L560.0 181.7 L568.3 190.8 L573.3 190.0 L576.7 190.8 L575.8 195.8 L572.5 201.7 L571.7 208.3 L573.3 215.0 L571.7 219.2 L568.3 217.5 L564.2 211.7 L556.7 200.0 L550.0 191.7 L546.7 183.3 L542.5 170.0 Z"/>
<path d="M540.0 186.7 L546.7 196.7 L552.0 208.0 L563.3 228.3 L575.0 248.3 L581.7 261.7 L590.8 280.0"/>
<path d="M552.0 208.0 L556.7 211.7 L566.7 228.3 L578.3 250.0 L586.7 265.0 L595.8 280.0"/>
<path d="M540.8 164.2 L544.2 178.3 L548.3 188.3 L556.7 200.8 L565.0 215.0 L575.0 231.7 L585.0 250.0 L598.3 276.7 L600.3 280.0"/>
<path d="M571.7 208.3 L578.3 220.0 L590.0 238.3 L600.0 256.7 L611.7 276.7 L614.2 280.0"/>
<path d="M573.3 215.0 L583.3 230.0 L596.7 253.3 L606.7 271.7 L611.7 280.0"/>
<path d="M575.8 253.3 L578.3 252.5 L581.7 255.0 L580.8 259.2 L576.7 260.0 L575.0 256.7 Z"/>
<path d="M583.3 280.0 L583.0 271.7 L585.8 267.5 L589.2 269.2"/>
<path d="M629.5 160.0 L660.0 169.5 L673.3 175.0 L680.0 161.7"/>
<path d="M673.3 175.0 L676.7 186.7 L680.0 200.0"/>
<path d="M650.0 228.3 L641.7 240.0 L635.0 247.5 L610.0 267.0"/>
<path d="M648.7 223.7 L650.0 228.3 L658.3 233.3 L661.7 243.3 L670.0 260.0 L680.0 276.7"/>
<path d="M440.0 307.5 L456.7 321.7 L478.3 340.0"/>
<path d="M455.8 280.0 L461.7 285.0 L471.7 289.2 L480.8 290.8"/>
<path d="M490.0 280.0 L497.5 296.7 L499.2 313.3 L506.7 335.0 L511.7 350.0 L520.0 363.3 L526.7 380.0 L525.8 390.0 L530.0 400.0 L535.0 413.3 L546.7 425.0 L555.0 430.0"/>
<path d="M495.8 280.0 L500.0 295.0 L502.5 311.7 L506.7 326.7 L511.7 340.0 L516.7 351.7 L523.3 361.7 L530.0 375.0 L533.3 386.7"/>
<path d="M506.3 313.3 L525.8 300.8 L531.3 313.8 L510.8 329.5 Z"/>
<path d="M531.3 313.8 L536.7 321.2"/>
<path d="M516.3 343.3 L538.3 324.2 L540.0 327.8 L518.0 347.0 Z"/>
<path d="M540.5 320.0 L553.3 311.2 L568.0 335.0 L556.7 343.8 Z"/>
<path d="M556.7 343.8 L568.3 368.3 L570.0 369.2"/>
<path d="M514.2 352.5 L526.7 355.0 L540.0 355.8 L548.3 360.0 L556.7 366.7 L563.3 371.7 L570.0 370.0 L571.7 366.7 L595.0 357.5 L615.0 346.7"/>
<path d="M542.5 362.5 L546.7 361.7 L556.7 368.3 L563.3 380.0 L571.7 395.0 L581.7 411.7 L590.0 425.0 L595.0 433.3 L590.0 433.3 L583.3 420.0 L573.3 403.3 L561.7 383.3 L555.0 371.7 L544.2 365.0 Z"/>
<path d="M535.8 373.3 L538.3 370.8 L545.0 386.7 L551.7 403.3 L559.2 421.7 L563.3 431.7 L557.5 431.7 L550.0 423.3 L543.3 411.7 L538.3 396.7 L535.3 383.3 Z"/>
<path d="M533.3 386.7 L540.0 385.0"/>
<path d="M613.3 280.0 L621.7 295.0 L630.0 310.0 L638.3 326.7 L640.0 338.3 L638.3 346.7 L641.7 363.3 L650.0 373.3 L656.7 386.7 L657.5 393.3 L651.7 403.3 L642.5 403.3"/>
<path d="M619.2 280.0 L628.3 296.7 L636.7 311.7 L653.3 335.0 L661.7 346.7 L673.3 358.3 L680.0 373.3"/>
<path d="M630.0 296.7 L633.3 294.2"/>
<path d="M633.3 291.3 L634.7 290.0 L636.2 291.3 L634.7 292.8 Z"/>
<path d="M600.8 370.8 L610.0 360.0 L615.0 363.3 L615.8 373.3 L611.7 378.3 L607.5 380.8 Z"/>
<path d="M615.0 363.3 L621.7 373.3 L621.7 380.0 L626.7 390.0 L635.0 398.3 L642.5 403.3 L640.0 408.3 L630.0 415.0 L621.7 423.3 L611.7 430.0"/>
<path d="M642.5 404.2 L648.3 402.5 L658.3 414.2 L654.2 419.2 Z"/>
<path d="M661.7 346.7 L665.0 380.0 L670.0 406.7 L680.0 407.5"/>
<path d="M568.7 321.2 L600.8 300.0 L606.7 309.5 L596.7 315.0 L591.7 316.7 L580.0 325.0 L573.3 328.7 Z"/>
<path d="M573.3 328.7 L580.8 340.0 L584.2 342.0 L615.0 323.3 L606.7 309.5"/>
<path d="M580.8 340.0 L582.5 337.5 L588.3 332.5 L592.0 330.8 L593.3 332.5 L592.0 335.3 L585.8 340.8 L584.2 342.0"/>
<path d="M560.0 321.7 L563.3 324.2 L568.7 321.2"/>
<path d="M563.3 324.2 L568.3 335.0 L560.0 340.8"/>
<path d="M585.0 344.2 L596.7 337.0 L604.2 350.3 L593.3 357.0 Z"/>
<path d="M596.7 337.0 L606.2 331.2 L614.2 344.2 L604.2 350.3"/>
<path d="M592.8 357.5 L615.0 345.8"/>
<path d="M593.3 357.5 L581.7 365.0"/>
<path d="M604.2 350.3 L610.0 359.2 L605.0 365.0"/>
<path d="M610.0 359.2 L615.0 365.0"/>
<path d="M615.0 323.3 L623.3 333.7 L626.2 331.2 L625.0 323.3 L626.2 321.5 L630.8 330.0 L632.3 340.8 L620.0 353.5 L614.5 345.0"/>
<path d="M596.7 280.0 L598.7 290.0 L600.8 296.7 L606.7 309.2"/>
<path d="M602.5 280.0 L603.3 290.0 L610.0 300.0 L616.7 310.8 L625.0 320.8"/>
<path d="M604.2 280.0 L605.8 290.0 L613.3 298.3 L617.5 305.0 L626.7 319.2 L632.5 330.0 L640.0 340.0"/>
<path d="M563.3 354.2 L574.5 344.2 L577.0 348.3 L565.8 359.2 Z"/>
<path d="M568.3 361.7 L579.5 351.2 L582.5 355.8 L570.8 365.0 Z"/>
<path d="M716.2 86.2 L718.8 97.5 L735.0 96.2 L757.5 102.5 L775.0 97.5 L790.0 91.2 L800.0 87.5 L815.0 86.2"/>
<path d="M718.8 97.5 L710.0 112.5 L692.5 135.0 L678.8 155.0 L673.8 175.0 L677.5 190.0 L683.8 210.0 L692.5 215.0 L701.2 211.2 L706.2 202.5 L712.5 180.0 L718.8 160.0 L725.0 142.5 L735.0 125.0 L746.2 111.2 L757.5 102.5"/>
<path d="M673.8 175.0 L660.0 170.0"/>
<path d="M838.8 86.2 L852.5 91.2 L867.5 100.0 L885.0 106.2 L897.5 112.5 L906.2 122.5 L910.0 131.2 L921.2 140.0 L936.2 147.5 L945.0 162.5 L951.2 176.2 L945.0 195.0 L937.5 215.0"/>
<path d="M921.2 140.0 L928.8 130.0 L938.8 118.8"/>
<path d="M893.8 100.5 L886.2 107.0"/>
<path d="M900.0 86.2 L898.8 91.2 L892.5 95.5"/>
<path d="M981.2 110.0 L1002.5 98.8 L1010.0 86.2"/>
<path d="M995.0 120.0 L1000.0 116.2 L1008.8 117.5 L1015.0 126.2 L1020.0 135.0"/>
<path d="M817.5 233.8 L817.5 245.0"/>
<path d="M817.5 245.0 L807.5 251.2 L796.2 252.5"/>
<path d="M817.5 245.0 L835.0 247.5 L852.5 255.0 L872.5 265.0 L897.5 276.2 L910.0 277.5 L920.0 292.5 L928.8 310.0"/>
<path d="M796.2 252.5 L788.8 245.0 L787.5 237.5 L792.5 227.5 L800.0 221.2 L810.0 217.5 L820.0 212.5 L827.5 210.0 L840.0 215.0 L847.5 220.0 L851.2 227.5 L851.2 231.2"/>
<path d="M787.5 243.8 L770.0 257.5 L745.0 267.5 L720.0 267.5 L710.0 273.8 L683.8 277.5"/>
<path d="M810.0 248.8 L790.0 265.0 L770.0 282.5 L762.5 293.8"/>
<path d="M660.0 232.5 L670.0 255.0 L683.8 277.5 L691.2 297.5"/>
<path d="M671.2 297.5 L691.2 298.8 L730.0 298.8 L745.0 296.2 L762.5 293.8 L780.0 300.0 L796.2 306.2 L805.0 310.0"/>
<path d="M745.0 296.2 L751.2 305.0 L745.0 310.0"/>
<path d="M937.5 215.0 L932.5 230.0 L947.5 235.0 L960.0 240.0 L977.5 257.5 L990.0 275.0 L993.8 292.5 L975.0 302.5 L960.0 310.0"/>
<path d="M993.8 292.5 L1020.0 292.5"/>
<path d="M1005.0 213.8 L1015.0 227.5 L1020.0 240.0"/>
<path d="M845.0 277.5 L867.5 283.8 L900.0 283.8 L915.0 287.5 L922.5 295.0 L928.8 310.0"/>
<path d="M845.0 277.5 L848.8 297.5 L857.5 310.0"/>
<path d="M1010.0 86.2 L1035.0 110.0 L1053.8 127.5 L1060.0 138.8 L1060.0 185.0"/>
<path d="M1060.0 185.0 L1077.5 192.5 L1087.5 205.0 L1096.2 221.2 L1101.2 230.0 L1115.0 230.0 L1127.5 222.5 L1145.0 207.5 L1157.5 205.0 L1175.0 191.2 L1190.0 180.0 L1198.8 175.5"/>
<path d="M1060.0 185.0 L1053.8 195.0 L1047.5 212.5 L1040.0 235.0 L1036.2 242.5 L1027.5 247.5"/>
<path d="M1005.0 213.8 L1017.5 227.5 L1025.0 245.0 L1028.0 260.0 L1027.5 292.5"/>
<path d="M995.0 120.0 L998.8 116.2 L1007.5 117.5 L1015.0 125.0 L1022.5 136.2 L1027.5 138.8 L1042.5 145.0 L1037.5 157.5 L1030.0 172.5 L1027.5 176.2 L1020.0 185.0 L1016.2 197.5 L1012.5 210.0"/>
<path d="M1027.5 138.8 L1028.8 122.5 L1030.8 119.5 L1032.5 122.5 L1030.0 138.8"/>
<path d="M960.0 235.0 L975.0 255.0 L987.5 270.0 L993.8 282.5 L993.8 292.5"/>
<path d="M993.8 292.5 L1027.5 292.5 L1031.2 293.8"/>
<path d="M960.0 307.5 L975.0 298.8 L992.5 293.8"/>
<path d="M970.0 310.0 L985.0 302.5 L1005.0 299.5 L1025.0 300.5"/>
<path d="M1027.5 292.5 L1022.5 310.0"/>
<path d="M1031.2 293.0 L1033.8 310.0"/>
<path d="M680.0 297.5 L690.0 298.3 L713.3 296.7 L745.0 295.8 L761.7 294.2 L780.0 298.3 L796.7 305.0 L806.7 313.3 L813.3 317.5 L830.0 321.7 L864.2 329.2 L874.2 318.3"/>
<path d="M745.0 295.8 L748.3 305.0"/>
<path d="M748.3 305.0 L740.0 313.3 L730.0 323.3 L720.0 338.3 L710.0 353.3 L708.3 356.7"/>
<path d="M748.3 305.0 L760.0 317.5 L758.3 328.3 L751.7 341.7 L743.3 353.3 L738.3 358.3 L735.0 361.7"/>
<path d="M760.0 317.5 L765.0 317.5 L770.8 318.7 L780.0 325.0 L796.7 337.5 L813.3 350.0 L830.0 363.3 L842.5 373.3 L853.3 381.7 L860.0 390.8 L865.0 394.2 L873.3 394.2 L883.3 403.3 L893.3 411.7 L890.0 421.7 L888.3 430.0"/>
<path d="M761.7 321.7 L762.5 328.3 L764.7 322.5 L773.3 330.0 L796.7 346.7 L821.7 365.0 L838.3 378.3"/>
<path d="M842.5 373.3 L838.3 378.3 L830.0 391.7 L821.7 403.3"/>
<path d="M738.3 358.3 L744.2 357.5 L755.0 364.2 L770.0 375.8 L785.0 385.8"/>
<path d="M785.0 385.8 L790.0 378.3 L793.3 370.0 L796.7 365.8 L801.7 364.7 L808.3 367.5 L811.7 373.3 L813.3 378.3 L817.5 381.7 L818.3 388.3 L813.3 394.2 L805.8 399.2 L796.7 400.8 L786.7 399.2 L781.7 395.0 L782.5 389.2 Z"/>
<path d="M805.8 399.2 L811.7 403.3 L821.7 403.7 L825.0 413.3 L825.8 421.7 L823.3 430.0"/>
<path d="M708.3 355.8 L721.7 355.8 L730.0 358.3 L735.0 361.7"/>
<path d="M699.2 356.7 L708.3 355.8"/>
<path d="M699.2 356.7 L695.8 361.7 L695.0 366.7 L689.2 373.3 L690.8 380.0 L688.3 383.3"/>
<path d="M707.5 361.7 L720.0 367.5 L720.8 372.5 L707.5 397.5 L698.3 393.3 L693.3 395.0 L691.7 390.0 L696.7 380.0 Z"/>
<path d="M735.0 361.7 L725.0 376.7 L720.0 388.3 L715.0 405.0"/>
<path d="M680.0 375.0 L692.5 390.0"/>
<path d="M680.0 380.0 L688.3 390.0 L692.5 395.0 L698.3 395.0"/>
<path d="M680.0 396.7 L696.7 408.3 L721.7 425.0 L728.3 430.0"/>
<path d="M683.3 401.7 L683.3 406.7 L682.5 418.3 L685.0 430.0"/>
<path d="M701.7 396.7 L715.0 405.0 L730.0 415.0 L755.0 430.0"/>
<path d="M845.0 280.0 L846.7 288.3 L851.7 300.0 L861.7 310.0 L874.2 318.3 L885.0 328.3 L893.3 338.3 L896.7 350.0 L905.0 358.3 L910.0 366.7 L912.5 375.0 L911.7 388.3 L910.0 403.3"/>
<path d="M848.3 280.0 L863.3 283.3 L880.0 282.5 L900.0 283.3 L910.0 290.0 L920.0 296.7"/>
<path d="M901.7 327.5 L907.5 318.3 L917.5 326.7 L911.7 336.7 Z"/>
<path d="M911.7 336.7 L916.7 344.2 L920.0 345.0"/>
<path d="M920.0 340.8 L910.0 340.8 L904.2 344.2 L905.8 351.7 L911.7 354.2 L920.0 354.2"/>
<path d="M912.5 375.0 L920.0 375.8"/>
<path d="M896.7 430.0 L898.3 421.7 L900.0 410.0 L898.3 400.8 L903.3 399.2 L910.0 403.3 L916.7 408.3 L918.3 418.3 L916.7 430.0"/>
<path d="M915.0 280.0 L920.0 285.0"/>
<path d="M690.8 298.0 L704.0 320.0 L719.2 339.2"/>
<path d="M993.3 280.0 L993.3 293.3 L1025.0 293.3 L1027.5 288.3 L1027.5 280.0"/>
<path d="M993.3 293.3 L981.7 298.3 L970.0 305.0 L953.3 312.5 L936.7 319.2 L930.8 323.3"/>
<path d="M1023.3 300.8 L1013.3 299.2 L1000.0 300.0 L986.7 303.3 L973.3 310.0 L953.3 320.0 L936.7 327.5 L930.0 330.8"/>
<path d="M920.0 289.2 L925.0 296.7 L928.3 310.0 L930.0 323.3 L930.0 330.8 L927.5 340.0 L920.0 344.2"/>
<path d="M1025.0 293.3 L1030.0 294.2 L1031.7 296.7"/>
<path d="M1026.7 300.0 L1021.7 310.0 L1016.7 321.7 L1014.2 335.0 L1013.3 350.0 L1015.8 360.0 L1016.7 373.3 L1017.5 388.3 L1015.0 400.0 L1014.2 413.3 L1015.8 420.0 L1011.7 430.0"/>
<path d="M1028.3 298.3 L1024.2 313.3 L1022.5 330.0 L1024.2 346.7 L1026.7 363.3 L1030.0 376.7 L1030.8 386.7 L1028.3 400.0 L1024.2 413.3 L1020.0 426.7 L1019.2 430.0"/>
<path d="M1016.7 373.3 L1020.0 378.3 L1024.2 388.3 L1025.8 395.0 L1023.3 406.7 L1020.0 418.3 L1017.5 423.3"/>
<path d="M1013.3 350.0 L1003.3 353.3 L991.7 358.3 L983.3 357.5 L975.0 363.3 L961.7 368.3 L945.0 372.5 L925.0 375.8 L920.0 376.7"/>
<path d="M1015.0 358.3 L1003.3 361.7 L986.7 368.3 L961.7 376.7 L945.0 382.5 L935.8 385.0"/>
<path d="M920.0 355.0 L930.0 356.7 L938.3 360.0 L942.5 366.7 L945.0 372.5"/>
<path d="M925.0 375.8 L928.3 381.7 L935.8 385.0 L940.8 391.7 L942.5 398.3 L970.8 393.3 L970.8 430.0"/>
<path d="M942.5 398.3 L942.5 413.3 L941.7 426.7 L930.0 423.3 L920.0 422.5"/>
<path d="M1069.2 371.7 L1080.0 365.0 L1093.3 356.7 L1103.3 348.3 L1108.3 345.8 L1114.2 348.3 L1120.0 363.3 L1130.0 383.3 L1138.3 401.7"/>
<path d="M1138.3 401.7 L1120.0 418.3 L1105.0 430.0"/>
<path d="M1069.2 385.0 L1061.7 395.0 L1051.7 408.3 L1043.3 421.7 L1038.3 430.0"/>
<path d="M1015.0 420.8 L1003.3 425.0 L993.3 430.0"/>
<path d="M456.7 503.3 L474.2 499.2 L483.3 480.8 L500.0 469.2"/>
<path d="M474.2 499.2 L493.3 521.7 L499.2 536.7 L504.2 556.7 L508.3 575.0 L510.0 580.0"/>
<path d="M493.3 521.7 L514.2 511.7 L531.7 500.0 L515.0 465.8 L505.8 467.5"/>
<path d="M531.7 500.0 L556.7 506.7 L588.3 515.3 L610.8 469.2"/>
<path d="M588.3 515.3 L591.7 538.3 L596.7 562.5 L605.8 563.0 L615.0 580.0"/>
<path d="M596.7 562.5 L587.5 575.8 L566.7 579.2 L563.3 580.0"/>
<path d="M587.5 575.8 L590.0 580.0"/>
<path d="M555.0 430.0 L563.3 438.3 L573.3 446.7 L590.0 456.7 L610.8 469.2 L631.7 483.3 L650.0 496.7 L680.0 513.3"/>
<path d="M561.7 430.0 L566.7 436.7 L573.3 441.7 L585.0 443.3 L600.0 442.5 L600.8 440.0 L595.0 431.7 L594.2 430.0 Z"/>
<path d="M573.3 445.0 L600.0 444.2 L610.0 450.0 L623.3 455.0 L636.7 455.8 L650.0 465.8 L655.0 470.0 L656.7 475.0 L655.0 476.7 L670.0 483.3 L680.0 488.3"/>
<path d="M600.0 430.0 L606.7 440.0 L616.7 451.7 L623.3 455.0"/>
<path d="M583.3 430.0 L588.3 433.3 L593.3 434.2"/>
<path d="M596.7 430.0 L603.3 435.8 L610.0 433.3 L613.3 430.0"/>
<path d="M680.0 433.3 L673.3 448.3 L665.0 460.0 L656.7 470.8"/>
<path d="M680.0 487.5 L708.3 499.2 L710.8 501.7 L744.2 522.5"/>
<path d="M736.7 478.3 L743.3 470.0 L753.3 459.2"/>
<path d="M736.7 478.3 L737.5 490.0 L743.3 520.8"/>
<path d="M753.3 459.2 L776.7 474.2 L756.7 494.2"/>
<path d="M776.7 474.2 L808.3 500.0 L796.7 524.2"/>
<path d="M748.3 528.3 L766.7 559.2 L772.5 566.7 L773.3 528.3 L786.7 533.3 L796.7 526.7"/>
<path d="M786.7 533.3 L785.0 546.7 L790.0 566.7 L793.3 580.0"/>
<path d="M816.7 526.7 L830.0 534.2 L845.0 546.7 L846.7 553.3 L842.5 561.7 L833.3 568.3 L826.7 567.5 L816.7 573.3 L809.2 579.2"/>
<path d="M833.3 568.3 L846.7 568.3 L865.0 566.7 L868.3 565.8"/>
<path d="M719.2 430.0 L738.3 445.0 L753.3 458.3 L776.7 475.0 L808.3 500.0 L826.7 513.3 L840.0 528.3 L853.3 545.0 L863.3 556.7 L870.0 571.7 L873.3 580.0"/>
<path d="M730.0 430.0 L750.0 445.0 L773.3 463.3 L796.7 480.0 L818.3 495.0 L835.0 508.3 L848.3 523.3 L860.0 543.3 L868.3 563.3 L875.8 580.0"/>
<path d="M743.3 430.0 L766.7 445.0 L788.3 461.7 L813.3 478.3 L830.0 488.3 L846.7 499.2 L856.7 508.3 L865.0 520.0 L873.3 536.7 L880.0 556.7 L886.7 573.3 L889.2 580.0"/>
<path d="M753.3 430.0 L773.3 441.7 L796.7 459.2 L818.3 475.0 L838.3 488.3 L853.3 500.0 L863.3 510.0 L871.7 523.3 L878.3 543.3 L885.0 563.3 L891.7 580.0"/>
<path d="M805.8 464.2 L816.7 447.5 L822.5 430.0"/>
<path d="M816.7 447.5 L835.8 470.8 L845.0 465.8 L856.7 459.2 L888.3 438.3 L890.0 430.0"/>
<path d="M856.7 460.0 L880.0 460.8 L889.2 471.7 L885.0 489.2 L863.3 496.7 L853.3 500.8"/>
<path d="M845.0 465.8 L860.0 480.0 L862.5 486.7 L863.3 496.7"/>
<path d="M889.2 471.7 L898.3 473.3 L900.8 441.7 L895.0 440.0 L888.3 438.3"/>
<path d="M895.0 440.0 L896.7 430.0"/>
<path d="M900.8 441.7 L916.7 435.0 L918.3 430.0"/>
<path d="M898.3 473.3 L920.0 477.5"/>
<path d="M885.0 489.2 L920.0 492.5"/>
<path d="M907.5 494.2 L903.3 510.0 L913.3 516.7 L920.0 517.5"/>
<path d="M853.3 500.8 L871.7 503.3 L888.3 513.3 L905.0 525.0 L920.0 538.3"/>
<path d="M856.7 505.0 L870.0 510.0 L883.3 518.3 L896.7 530.0 L913.3 550.0 L920.0 558.3"/>
<path d="M679.2 512.5 L686.3 520.8"/>
<path d="M1010.8 430.0 L1003.3 463.3 L993.3 506.7 L984.2 540.8 L989.2 542.5 L998.3 503.3 L1006.7 463.3 L1018.3 430.0"/>
<path d="M1036.7 430.0 L1030.0 440.0 L1023.3 450.0 L1010.8 459.2"/>
<path d="M1006.7 478.3 L1055.0 479.2"/>
<path d="M1058.3 480.0 L1061.7 485.0 L1060.8 495.0 L1056.7 501.7 L1052.5 506.7 L1046.7 503.3 L1042.5 498.3 L1041.7 491.7 L1045.0 485.8 L1050.8 480.8 L1055.0 479.2 Z"/>
<path d="M1070.0 481.7 L1087.5 491.7 L1080.0 512.5 L1064.2 504.2 L1066.7 496.7 L1065.0 494.2 Z"/>
<path d="M1087.5 491.7 L1111.7 498.3"/>
<path d="M1015.0 575.0 L1020.0 568.3 L1032.5 546.7 L1043.3 524.2 L1048.3 526.7 L1036.7 550.0 L1025.3 568.3 L1020.8 575.0"/>
<path d="M1105.0 520.8 L1096.7 533.3 L1086.7 550.0 L1076.7 561.7 L1066.7 570.0 L1058.3 580.0"/>
<path d="M989.2 542.5 L1003.3 555.0 L1016.7 568.3 L1026.7 580.0"/>
<path d="M992.5 507.5 L985.0 523.3 L975.0 538.3 L966.7 548.3 L956.7 556.7 L945.0 560.8"/>
<path d="M1010.0 431.7 L998.3 456.7 L990.0 470.0 L975.0 479.2 L960.0 487.5 L939.2 490.3 L920.0 493.0"/>
<path d="M970.0 430.0 L970.8 468.3 L945.0 465.0 L942.5 479.2 L939.2 480.0 L940.0 490.0"/>
<path d="M970.0 441.7 L981.7 438.3 L993.3 431.7 L995.0 430.0"/>
<path d="M920.0 478.3 L933.3 477.5 L939.2 480.0"/>
<path d="M920.0 516.7 L931.7 525.0 L934.2 538.3 L935.8 553.3 L945.0 560.8"/>
<path d="M920.0 538.3 L935.8 553.3 L953.3 575.0 L957.5 580.0"/>
<path d="M920.0 553.3 L943.3 580.0"/>
<path d="M1070.8 430.0 L1073.3 440.0 L1080.0 455.0 L1080.8 450.8 L1075.8 438.3 L1075.0 430.0"/>
<path d="M1080.8 450.8 L1095.0 440.0 L1108.3 430.0"/>
<path d="M510.8 580.0 L520.0 600.0 L533.3 616.7 L540.0 623.3"/>
<path d="M560.0 580.0 L550.0 596.7 L544.2 611.7 L542.5 619.2"/>
<path d="M588.3 580.0 L596.7 600.0 L606.7 626.7 L610.8 646.7 L611.7 660.0"/>
<path d="M619.2 668.3 L617.5 683.3 L614.2 700.0 L604.2 711.7 L599.2 720.0 L597.5 730.0"/>
<path d="M658.3 685.0 L655.0 695.0 L655.0 705.0 L663.3 718.3 L671.7 730.0"/>
<path d="M615.0 580.0 L633.3 591.7"/>
<path d="M755.0 580.0 L766.7 591.7 L780.0 611.7 L788.3 623.3 L796.7 628.3 L806.7 635.0"/>
<path d="M713.3 662.5 L720.0 670.0 L728.3 680.0 L770.0 691.7"/>
<path d="M806.7 635.0 L800.0 646.7 L788.3 665.0 L776.7 683.3 L770.0 691.7 L761.7 706.7 L756.7 720.0 L751.7 730.0"/>
<path d="M808.3 580.0 L811.7 605.0 L813.3 631.7"/>
<path d="M793.3 580.0 L796.7 596.7 L797.5 611.7 L795.8 622.5 L799.2 623.3 L798.3 627.5 L813.3 631.7"/>
<path d="M820.0 613.3 L826.7 635.0 L829.2 655.0 L821.7 673.3 L810.0 693.3 L800.0 710.0 L793.3 723.3 L790.0 730.0"/>
<path d="M790.0 725.0 L800.0 730.0"/>
<path d="M868.3 615.8 L846.7 626.7 L845.0 630.0 L848.3 646.7 L851.7 666.7 L855.0 688.3 L855.8 713.3 L858.3 730.0"/>
<path d="M820.0 595.0 L846.7 605.0 L868.3 615.8 L880.0 631.7 L890.0 643.3 L896.7 641.7 L901.7 639.2 L910.0 646.7 L920.0 660.0"/>
<path d="M874.2 580.0 L880.0 598.3 L888.3 625.0 L896.7 646.7 L900.0 666.7 L903.0 690.0"/>
<path d="M878.3 580.0 L885.0 600.0 L893.3 626.7 L900.0 646.7 L905.0 666.7 L911.3 690.0"/>
<path d="M886.7 580.0 L891.7 596.7 L894.2 613.3 L896.7 613.3 L896.7 603.3 L891.7 580.0"/>
<path d="M958.3 580.0 L975.0 598.3 L990.0 616.7 L1006.7 633.3 L1026.7 648.3 L1045.0 660.0 L1058.3 665.0"/>
<path d="M943.3 581.7 L963.3 605.0 L980.0 625.0 L1000.0 645.0 L1020.0 661.7 L1038.3 673.3 L1049.2 679.2"/>
<path d="M1015.0 575.0 L1003.3 593.3 L986.7 611.7 L977.5 625.0 L966.7 643.3 L955.0 666.7 L945.0 690.0"/>
<path d="M1020.0 575.0 L1008.3 595.0 L990.8 615.8 L982.5 629.2 L971.7 646.7 L960.8 668.3 L950.8 691.7"/>
<path d="M1010.0 560.0 L1016.7 566.7 L1026.7 576.7 L1035.0 588.3 L1038.3 596.7 L1046.7 618.3 L1055.0 640.0 L1062.5 660.0"/>
<path d="M1038.3 596.7 L1053.3 583.3 L1066.7 571.7 L1076.7 560.0"/>
<path d="M984.2 665.0 L980.0 676.7 L975.8 690.0 L978.3 700.0 L983.3 710.0"/>
<path d="M900.0 640.0 L905.0 641.7 L910.0 648.3 L921.7 658.3 L936.7 668.3 L948.3 676.7 L963.3 688.3 L971.7 695.0"/>
<path d="M900.0 646.7 L905.0 668.3 L910.0 690.0 L916.7 710.0"/>
<path d="M963.3 688.3 L962.5 693.3 L966.7 698.3 L971.7 700.0 L973.3 705.0 L966.7 710.0"/>
<path d="M1045.0 701.7 L1038.3 693.3 L1033.3 685.0 L1026.7 678.3 L1020.0 675.8 L1013.3 679.2 L1011.7 686.7 L1006.7 691.7 L1001.7 693.3 L1000.8 700.0 L1004.2 710.0"/>
<path d="M615.8 690.0 L613.3 701.7 L601.7 715.0 L598.3 726.7 L600.8 743.3 L595.0 765.0 L590.0 783.3 L587.5 791.7"/>
<path d="M656.7 690.0 L654.2 700.0 L660.0 711.7 L673.3 731.7 L686.7 750.0 L700.0 763.3 L713.3 778.3 L721.7 788.3 L718.3 803.3 L713.3 818.3 L706.7 831.7"/>
<path d="M721.7 788.3 L720.8 778.3 L724.2 771.7 L736.7 768.3 L742.5 773.3 L745.8 780.8 L741.7 791.7 L730.0 791.7 Z"/>
<path d="M730.8 776.7 L737.5 775.8 L738.0 782.5 L732.0 783.0 Z"/>
<path d="M732.0 783.0 L737.5 790.8"/>
<path d="M747.5 764.2 L751.7 762.0 L758.3 765.0 L765.0 773.3 L773.3 781.7 L774.2 788.3 L770.0 795.0 L763.3 799.2 L755.0 799.2 L748.3 795.0 L746.7 786.7 Z"/>
<path d="M748.3 795.0 L748.3 803.3 L763.3 810.0 L780.0 813.3 L809.2 818.3 L820.0 818.3"/>
<path d="M763.3 765.0 L768.3 763.3 L780.0 768.3 L796.7 775.0 L820.0 785.0"/>
<path d="M809.2 818.3 L804.2 831.7"/>
<path d="M740.0 760.0 L746.7 743.3 L753.3 726.7 L760.0 706.7 L768.3 693.3 L770.0 690.0"/>
<path d="M803.3 690.0 L796.7 706.7 L791.7 723.3 L780.0 743.3 L770.0 756.7 L763.3 765.0"/>
<path d="M791.7 725.0 L805.0 731.7 L820.0 740.0"/>
<path d="M855.0 690.0 L855.8 710.0 L857.5 723.3 L870.0 760.0 L886.7 800.0 L900.0 831.7"/>
<path d="M820.0 740.0 L851.7 758.3 L870.0 760.0"/>
<path d="M851.7 758.3 L846.7 761.7 L845.0 776.7 L848.3 791.7 L854.2 806.7 L855.0 821.7 L860.0 831.7"/>
<path d="M820.0 785.8 L848.3 792.5"/>
<path d="M820.0 818.3 L843.3 823.3 L855.0 821.7"/>
<path d="M901.7 690.0 L908.3 715.0 L920.0 748.3 L930.0 783.3 L936.7 815.0 L939.2 831.7"/>
<path d="M910.8 690.0 L918.3 715.0 L930.0 760.0 L940.0 790.0 L948.3 820.0 L953.3 831.7"/>
<path d="M943.3 690.0 L940.0 701.7 L928.3 721.7 L922.5 733.3 L926.7 746.7 L930.8 763.3"/>
<path d="M950.0 690.0 L946.7 703.3 L936.7 721.7 L927.5 735.0 L930.0 746.7 L931.7 756.7 L930.8 763.3"/>
<path d="M962.5 690.0 L963.3 695.8 L971.7 700.0 L972.5 706.7 L966.7 708.3 L965.0 714.2 L960.0 715.8 L957.5 721.7 L961.7 736.7 L968.3 756.7 L973.3 783.3 L975.8 806.7 L983.3 823.3 L1000.0 820.0 L1000.0 831.7"/>
<path d="M966.7 690.0 L975.0 696.7 L984.2 705.0 L988.3 718.3 L995.0 733.3 L998.3 745.0 L1001.7 749.2 L1011.7 754.2 L1041.7 760.0"/>
<path d="M1010.0 690.0 L1001.7 693.3 L1002.5 703.3 L1008.3 720.0 L1013.3 738.3 L1041.7 750.0"/>
<path d="M1035.0 690.0 L1040.0 696.7 L1045.8 701.7"/>
<path d="M700.0 356.0 L688.0 342.0 L676.0 322.0 L664.0 298.0 L650.0 274.0 L638.0 250.0 L626.0 230.0 L615.0 206.0 L616.0 203.0 L618.0 202.5 L620.0 204.0 L630.0 226.0 L642.0 242.0 L654.0 262.0 L666.0 284.0 L677.0 306.0 L688.0 326.0 L700.0 348.0 L708.0 356.0"/>
<path d="M630.0 296.0 L662.0 297.0 L676.0 298.0 L691.0 298.0 L720.0 297.0"/>
<path d="M683.0 278.0 L704.0 276.0 L720.0 268.0"/>
</g>
<path d="M636.7 455.8 L643.3 443.3" fill="none" stroke="#000" stroke-width="2.0" stroke-linejoin="round" stroke-linecap="butt"/>
<path d="M535.8 280.0 L540.0 290.0 L543.3 301.7 L548.3 311.7 M720.0 432.5 L712.5 444.2 L715.8 463.3 L719.2 478.3 L715.8 485.8 L710.8 499.2 M896.7 603.3 L910.0 608.3 L920.0 611.7 M900.0 605.0 L910.0 608.3 L925.0 612.5 L938.3 621.7 L955.0 633.3 L966.7 642.5 L973.3 648.3 L981.7 655.0 L985.0 660.0 L984.2 665.0" fill="none" stroke="#000" stroke-width="2.1" stroke-linejoin="round" stroke-linecap="butt"/>
<path d="M657.5 123.2 L677.5 152.7" fill="none" stroke="#000" stroke-width="2.3" stroke-linejoin="round" stroke-linecap="butt"/>
<path d="M484.7 280.0 L481.3 296.7 L479.7 313.3 L479.7 338.3 L481.3 360.0 L485.3 380.0 L490.3 403.3 L493.7 421.7 L495.3 430.0" fill="none" stroke="#000" stroke-width="3.1" stroke-linejoin="round" stroke-linecap="butt"/>
<path d="M484.7 280.0 L481.3 296.7 L479.7 313.3 L479.7 338.3 L481.3 360.0 L485.3 380.0 L490.3 403.3 L493.7 421.7 L495.3 430.0" fill="none" stroke="#0035a8" stroke-width="0.8" stroke-linejoin="round" stroke-linecap="butt"/>
<path d="M371.2 86.2 L385.0 100.5 L400.0 113.8 L417.5 121.8 L440.0 126.8 L460.0 126.8 L477.0 124.2 M383.8 310.0 L392.5 300.5 L405.0 294.5 L422.5 293.0 L430.0 285.5 L440.0 271.2 L450.0 261.2 L462.5 254.2 L472.0 250.5 M963.0 86.2 L970.0 97.5 L977.0 110.0 L982.5 116.2" fill="none" stroke="#000" stroke-width="3.3" stroke-linejoin="round" stroke-linecap="butt"/>
<path d="M371.2 86.2 L385.0 100.5 L400.0 113.8 L417.5 121.8 L440.0 126.8 L460.0 126.8 L477.0 124.2 M383.8 310.0 L392.5 300.5 L405.0 294.5 L422.5 293.0 L430.0 285.5 L440.0 271.2 L450.0 261.2 L462.5 254.2 L472.0 250.5 M963.0 86.2 L970.0 97.5 L977.0 110.0 L982.5 116.2" fill="none" stroke="#0035a8" stroke-width="1.0" stroke-linejoin="round" stroke-linecap="butt"/>
<path d="M872.5 86.2 L885.0 94.5 L895.0 99.5 L910.0 107.0 L932.5 114.5 L955.0 116.0 L977.5 115.0 M977.5 115.0 L992.5 122.5 L1001.2 131.2 M746.3 525.3 L748.0 494.7 L773.3 499.2 L782.5 504.7 L789.2 515.0 L795.8 525.3 L816.7 526.2 L846.7 545.0 L865.0 557.0" fill="none" stroke="#000" stroke-width="3.7" stroke-linejoin="round" stroke-linecap="butt"/>
<path d="M872.5 86.2 L885.0 94.5 L895.0 99.5 L910.0 107.0 L932.5 114.5 L955.0 116.0 L977.5 115.0 M977.5 115.0 L992.5 122.5 L1001.2 131.2 M746.3 525.3 L748.0 494.7 L773.3 499.2 L782.5 504.7 L789.2 515.0 L795.8 525.3 L816.7 526.2 L846.7 545.0 L865.0 557.0" fill="none" stroke="#0035a8" stroke-width="1.4" stroke-linejoin="round" stroke-linecap="butt"/>
<path d="M496.3 430.0 L498.0 446.7 L502.0 463.3 L508.7 483.3 L514.5 501.7 L517.0 523.3 L517.8 546.7 L520.3 563.3 L522.8 580.0" fill="none" stroke="#000" stroke-width="3.9" stroke-linejoin="round" stroke-linecap="butt"/>
<path d="M496.3 430.0 L498.0 446.7 L502.0 463.3 L508.7 483.3 L514.5 501.7 L517.0 523.3 L517.8 546.7 L520.3 563.3 L522.8 580.0" fill="none" stroke="#0035a8" stroke-width="1.6" stroke-linejoin="round" stroke-linecap="butt"/>
<path d="M636.3 151.5 L636.7 144.0 L643.3 134.0 L653.3 124.0 L668.3 110.7 L685.0 97.3 L701.7 88.2 L715.0 86.2" fill="none" stroke="#000" stroke-width="4.1" stroke-linejoin="round" stroke-linecap="butt"/>
<path d="M636.3 151.5 L636.7 144.0 L643.3 134.0 L653.3 124.0 L668.3 110.7 L685.0 97.3 L701.7 88.2 L715.0 86.2" fill="none" stroke="#0035a8" stroke-width="1.8" stroke-linejoin="round" stroke-linecap="butt"/>
<path d="M818.0 235.8 L835.0 233.8 L860.0 231.5 L885.0 232.5 L905.0 229.0 L922.5 223.0 L937.5 217.0 L947.5 210.5 L960.0 207.5 L980.0 207.5 L997.5 208.5 L1006.2 213.0 M1031.3 295.0 L1033.7 305.0 L1038.7 320.0 L1048.7 336.7 L1058.7 351.7 L1065.3 365.0 L1070.3 380.0 L1076.7 395.0 L1077.8 400.0 L1076.0 413.3 L1074.2 430.0 M522.8 580.0 L531.7 607.5 L545.8 628.3 L561.7 643.3 L581.7 654.2 L608.3 663.3 L631.7 670.0 L650.0 676.7 L665.0 685.0 L680.0 693.3 M673.3 690.0 L691.7 703.3 L705.0 719.2 L717.5 737.5 L730.0 756.7 L738.3 766.7 L744.2 775.0" fill="none" stroke="#000" stroke-width="4.3" stroke-linejoin="round" stroke-linecap="butt"/>
<path d="M818.0 235.8 L835.0 233.8 L860.0 231.5 L885.0 232.5 L905.0 229.0 L922.5 223.0 L937.5 217.0 L947.5 210.5 L960.0 207.5 L980.0 207.5 L997.5 208.5 L1006.2 213.0 M1031.3 295.0 L1033.7 305.0 L1038.7 320.0 L1048.7 336.7 L1058.7 351.7 L1065.3 365.0 L1070.3 380.0 L1076.7 395.0 L1077.8 400.0 L1076.0 413.3 L1074.2 430.0 M522.8 580.0 L531.7 607.5 L545.8 628.3 L561.7 643.3 L581.7 654.2 L608.3 663.3 L631.7 670.0 L650.0 676.7 L665.0 685.0 L680.0 693.3 M673.3 690.0 L691.7 703.3 L705.0 719.2 L717.5 737.5 L730.0 756.7 L738.3 766.7 L744.2 775.0" fill="none" stroke="#0035a8" stroke-width="2.0" stroke-linejoin="round" stroke-linecap="butt"/>
<path d="M815.8 636.3 L818.0 591.3 L878.0 600.0" fill="none" stroke="#000" stroke-width="4.9" stroke-linejoin="round" stroke-linecap="butt"/>
<path d="M815.8 636.3 L818.0 591.3 L878.0 600.0" fill="none" stroke="#0035a8" stroke-width="2.6" stroke-linejoin="round" stroke-linecap="butt"/>
<path d="M1002.0 132.5 L1007.5 148.8 L1009.5 172.5 L1012.0 195.0 L1010.5 211.2" fill="none" stroke="#000" stroke-width="6.8" stroke-linejoin="round" stroke-linecap="butt"/>
<path d="M1002.0 132.5 L1007.5 148.8 L1009.5 172.5 L1012.0 195.0 L1010.5 211.2" fill="none" stroke="#0035a8" stroke-width="4.5" stroke-linejoin="round" stroke-linecap="butt"/>
<path d="M686.4 520.8 L705 532.4 L724 549.3 L740.9 566.2 L755.2 581 L713.4 662.3 L665.3 634.8 L660.7 679.1 L637.4 669.6 L626.5 664.4 L627.9 631.6 L631.1 610.5 L632.2 591.5 L652.2 578.9 L674.4 565.8 L677.5 551.4 L681.8 536.7 Z" fill="#ffff00" stroke="#000" stroke-width="1.3" stroke-linejoin="round"/>
</svg>
</div>
<div id="statusbar">
  <div class="sbox" style="left:656px;width:24px;background:#e9e9e9;border-color:#8c8c8c;border-radius:2px"></div>
  <svg class="abs" style="left:658px;top:2px" width="20" height="20" viewBox="0 0 20 20">
    <ellipse cx="7" cy="7" rx="3.500" ry="5.500" fill="none" stroke="#222" stroke-width="1.500" transform="rotate(-25 7 7)"/>
    <ellipse cx="10" cy="9" rx="2" ry="4" fill="none" stroke="#222" stroke-width="1.300" transform="rotate(-25 10 9)"/>
    <circle cx="12" cy="14" r="3.500" fill="#555" stroke="#111" stroke-width="1.200"/><circle cx="12" cy="14" r="1.200" fill="#eee"/>
    <path d="M14 4l3 -2M15.500 7l2 .5" stroke="#555" stroke-width="1" stroke-dasharray="1 1"/>
  </svg>
  <div class="sbox" style="left:682px;width:77px;padding-left:5px">Координаты:</div>
  <div class="sbox" style="left:761px;width:302px;background:#fff;border-color:#ababab;border-radius:2px;text-align:center;letter-spacing:-.12px;box-shadow:inset 0 1px 1px #ddd">625218.2,7216985.7</div>
  <div class="sbox" style="left:1066px;width:59px;padding-left:5px;letter-spacing:-.4px">Масштаб</div>
  <div class="sbox" style="left:1127px;width:83px;background:#fff;border-color:#ababab;border-radius:2px;padding-left:3.500px;letter-spacing:-.26px">1:55036270</div>
  <div class="abs" style="left:1192px;top:2px;width:17px;height:20px;background:linear-gradient(#f4f4f4,#dedede);border-left:1px solid #c8c8c8"></div>
  <svg class="abs" style="left:1196px;top:9px" width="9" height="6" viewBox="0 0 9 6"><path d="M0 .5h9l-4.500 5z" fill="#000"/></svg>
  <div class="sbox" style="left:1214px;width:23px;background:#e6e6e6;border-color:#8c8c8c;border-radius:2px"></div>
  <svg class="abs" style="left:1216px;top:3px" width="20" height="19" viewBox="0 0 20 19">
    <path d="M3 17q2 -2 5 -3l9 -12q1.500 .5 1 2l-8 12q-3 2 -7 1z" fill="#9a9a9a" stroke="#4a4a4a" stroke-width=".8"/>
    <circle cx="6.500" cy="6" r="4.500" fill="#fff" fill-opacity=".5" stroke="#d01a1a" stroke-width="1.600"/><path d="M3.500 9l6 -6" stroke="#d01a1a" stroke-width="1.600"/>
  </svg>
  <div class="sbox" style="left:1239px;width:84px;padding-left:20px;letter-spacing:0">Отрисовка</div>
  <svg class="abs" style="left:1241px;top:5px" width="14" height="14" viewBox="0 0 14 14"><rect x=".5" y=".5" width="12" height="12" fill="#fff" stroke="#b4b4b4"/><path d="M3 3l7 7M10 3l-7 7" stroke="#000" stroke-width="2.300"/></svg>
  <div class="sbox" style="left:1325px;width:64px;padding-left:4px;color:#8a8a8a;letter-spacing:-.5px">EPSG:4326</div>
  <div class="sbox" style="left:1393px;width:23px;background:#e6e6e6;border-color:#8c8c8c;border-radius:2px"></div>
  <svg class="abs" style="left:1395px;top:3px" width="19" height="19" viewBox="0 0 19 19"><circle cx="9.500" cy="9.500" r="7.500" fill="#a8a8a8" stroke="#5a5a5a" stroke-width="1.200"/><ellipse cx="9.500" cy="9.500" rx="3.500" ry="7.500" fill="none" stroke="#e6e6e6" stroke-width="1"/><path d="M2 9.500h15M9.500 2v15" stroke="#e6e6e6" stroke-width="1"/><circle cx="9.500" cy="9.500" r="7.500" fill="none" stroke="#5a5a5a" stroke-width="1.200"/></svg>
  <div class="sbox" style="left:1419px;width:22px;background:#f6f6f6;border-color:#9a9a9a"></div>
  <svg class="abs" style="left:1422px;top:4px" width="17" height="17" viewBox="0 0 17 17"><path d="M8.500 1.500l7 13.500h-14z" fill="#f4f01a" stroke="#3a3a1a" stroke-width="1.200" stroke-linejoin="round"/><path d="M8.500 6v4.500M8.500 12.300v.6" stroke="#000" stroke-width="1.600"/></svg>
</div>
<div id="taskbar">
<div class="tbtn" style="left:122px;width:54px;background:linear-gradient(135deg,rgba(255,255,255,.28),rgba(255,255,255,.04) 60%)"></div>
<div class="abs" style="left:177px;top:1px;width:4px;height:38px;border:1px solid rgba(255,255,255,.35);border-left:0;border-radius:0 3px 3px 0"></div>
<div class="tbtn" style="left:308px;width:59px;background:linear-gradient(135deg,rgba(255,255,255,.36),rgba(255,255,255,.12) 60%)"></div>
<div class="tbtn" style="left:370px;width:59px;background:linear-gradient(135deg,rgba(255,255,255,.72),rgba(255,255,255,.4) 55%,rgba(255,255,255,.5));box-shadow:inset 0 0 0 1px rgba(255,255,255,.7)"></div>
<div class="tbtn" style="left:432px;width:59px;background:linear-gradient(135deg,rgba(255,255,255,.36),rgba(255,255,255,.12) 60%)"></div>
<svg class="abs" style="left:0;top:-1px" width="1440" height="41" viewBox="0 859 1440 41">
<defs>
  <radialGradient id="gOrb" cx=".5" cy=".75" r=".8"><stop offset="0" stop-color="#4fd0ff"/><stop offset=".45" stop-color="#1a6ac0"/><stop offset="1" stop-color="#0a2a5a"/></radialGradient>
  <linearGradient id="gOrbHi" x1="0" y1="0" x2="0" y2="1"><stop offset="0" stop-color="#fff" stop-opacity=".75"/><stop offset="1" stop-color="#fff" stop-opacity=".05"/></linearGradient>
  <radialGradient id="gIE" cx=".4" cy=".35" r=".8"><stop offset="0" stop-color="#7fd0ff"/><stop offset="1" stop-color="#1a5ac0"/></radialGradient>
  <linearGradient id="gFolder" x1="0" y1="0" x2="0" y2="1"><stop offset="0" stop-color="#fbe9a0"/><stop offset="1" stop-color="#e8c45a"/></linearGradient>
</defs>
<!-- start orb -->
<circle cx="27" cy="880.500" r="18.500" fill="url(#gOrb)" stroke="#8fb8d8" stroke-width="1.200"/>
<path d="M10 876a17.500 17.500 0 0 1 34 0q-17 7 -34 0z" fill="url(#gOrbHi)"/>
<path d="M19 874q4 -2 7.500 -.5l-1.300 6.500q-3.500 -1.500 -7.500 .5z" fill="#f0582a"/><path d="M28 873.500q4 -2 8 0l-1.500 6.500q-3.500 -1.500 -7.500 .3z" fill="#8ac83a"/>
<path d="M17.500 882q4 -2 7.500 -.5l-1.300 6.500q-3.500 -1.500 -7.500 .5z" fill="#3aa0e8"/><path d="M26.500 881.500q4 -2 8 0l-1.500 6.500q-3.500 -1.500 -7.500 .3z" fill="#f8c02a"/>
<!-- IE -->
<path d="M96.500 885.500a8.500 8.500 0 1 1 1.200 -5.500h-15" fill="none" stroke="#0d4aa8" stroke-width="6.500"/>
<path d="M96.500 885.500a8.500 8.500 0 1 1 1.200 -5.500h-15" fill="none" stroke="#3a9ae8" stroke-width="4.500"/>
<path d="M82 876a8.500 8.500 0 0 1 14 -1" fill="none" stroke="#9ad8ff" stroke-width="2"/>
<path d="M76 895q-4 -5 3 -15q8 -10 18 -14q7 -2 8 2q-5 -3 -13 2q-9 6 -13 14q-4 7 -3 11z" fill="#f0c02a" stroke="#a87a0a" stroke-width=".6"/>
<path d="M76 895q4 2 10 -3" fill="none" stroke="#e8b82a" stroke-width="2"/>
<!-- explorer -->
<path d="M133 873h9l2 -3h14q2 0 2 2v4h-27z" fill="#f4d878" stroke="#b8923a" stroke-width=".6"/>
<rect x="136" y="869" width="3.500" height="2" fill="#2aa83a"/><rect x="144" y="870" width="3.500" height="2" fill="#d03a2a"/><rect x="152" y="871" width="3.500" height="2" fill="#2a7ad0"/>
<rect x="132.500" y="875.500" width="31" height="18" rx="1.500" fill="url(#gFolder)" stroke="#b8923a" stroke-width=".8"/>
<path d="M137 894v-8q0 -2.500 2.500 -2.500h17q2.500 0 2.500 2.500v8h-5v-5h-12v5z" fill="#7ac0f0" stroke="#e8f6ff" stroke-width="1"/>
<!-- wmp -->
<rect x="203" y="869.500" width="22" height="22" rx="1.500" fill="#6aa8e0" opacity=".8"/><rect x="199.500" y="870.500" width="22" height="22" rx="1.500" fill="#9ac8f0" stroke="#5a8ac0" stroke-width=".6"/>
<circle cx="210.500" cy="881.500" r="8" fill="#f0822a" stroke="#fff" stroke-width="1.200"/><path d="M208 877l7 4.500 -7 4.500z" fill="#fff"/>
<!-- computer -->
<ellipse cx="275" cy="891" rx="16" ry="4.500" fill="#1a5ad0"/>
<path d="M267 866l12 -1.500 4 1.500v24l-4 2h-12z" fill="#0a0a0a" stroke="#2a2a2a" stroke-width=".8"/><path d="M279 864.500v27" stroke="#3a3a3a" stroke-width=".8"/><path d="M269 869h8M269 871.500h8" stroke="#4a4a4a" stroke-width=".8"/>
<!-- chrome -->
<circle cx="337" cy="880" r="14" fill="#e8e8e8"/>
<path d="M337 880l-12.100 -7a14 14 0 0 1 24.200 0z" fill="#e03a2a"/><path d="M337 866a14 14 0 0 1 12.100 7h-12.100z" fill="#e03a2a"/>
<path d="M324.900 873a14 14 0 0 0 12.100 21l6 -10.500 -6 -3.500z" fill="#2aa84a"/>
<path d="M349.100 873a14 14 0 0 1 -12.100 21l6 -10.500 0 -10.500z" fill="#f8d02a"/>
<circle cx="337" cy="880" r="6.500" fill="#fff"/><circle cx="337" cy="880" r="5.200" fill="#3a8ae8"/>
<!-- qgis -->
<ellipse cx="397" cy="881" rx="8.500" ry="11" fill="#e4ee6a" stroke="#5a6a1a" stroke-width="1"/><ellipse cx="396.500" cy="881" rx="3.300" ry="6" fill="#8a8a8a" stroke="#5a6a1a" stroke-width=".8"/>
<path d="M399 888l8 5.500q2 1 2 -1.500l-1 -2 -2 1.500 -5 -5z" fill="#e4ee6a" stroke="#5a6a1a" stroke-width=".8"/>
<path d="M387 894l5 1.500 -1.500 -2.500 14 -20 2 1.500 .5 -8 -7 3.500 2 1 -14 20 -2.500 -1z" fill="#2a9a3a" stroke="#1a5a1a" stroke-width=".6"/>
<!-- pyscripter -->
<path d="M448 893q4 -5 9 -3t8 -2 7 -2q3 0 3 3 -3 -1 -6 2t-8 3 -8 2z" fill="#5a9a2a" stroke="#1a3a0a" stroke-width="1"/>
<path d="M452 870q5 -6 12 -3q5 3 3 9q-3 5 -10 4q-6 -1 -8 -5z" fill="#6aaa2a" stroke="#1a3a0a" stroke-width="1"/>
<circle cx="455.500" cy="869.500" r="3" fill="#fff" stroke="#1a3a0a" stroke-width=".8"/><circle cx="461.500" cy="868.500" r="3" fill="#fff" stroke="#1a3a0a" stroke-width=".8"/><circle cx="456" cy="870" r="1.100"/><circle cx="462" cy="869" r="1.100"/>
<path d="M450 877q5 3 12 0" fill="none" stroke="#1a3a0a" stroke-width="1"/><path d="M451 879l-1.500 4 3 -2z" fill="#e02a2a"/>
<path d="M474 866l4 3 -16 24 -5 2 1 -5z" fill="#f8c82a" stroke="#5a3a0a" stroke-width="1"/><path d="M474 866l2 -2.500 4 3 -2 2.500z" fill="#f08a9a" stroke="#5a3a0a" stroke-width=".8"/><path d="M457 895l1 -5 4 3z" fill="#f0d8b0" stroke="#5a3a0a" stroke-width=".6"/>
<!-- tray -->
<g transform="translate(0 -1.500)">
<path d="M1258 883.500h7.500l-3.750 -4.500z" fill="#fff"/>
<path d="M1280 874v15" stroke="#fff" stroke-width="1.500"/><path d="M1281 875q3 -1.500 5 0t5 0v7q-3 1.500 -5 0t-5 0z" fill="#fff"/>
<circle cx="1289.500" cy="885" r="4.500" fill="#d02a2a" stroke="#fff" stroke-width=".6"/><path d="M1287.500 883l4 4M1291.500 883l-4 4" stroke="#fff" stroke-width="1.300"/>
<rect x="1307.500" y="877.500" width="10" height="7.500" fill="#1a1a1a" stroke="#fff" stroke-width="1.300"/><path d="M1309 888.500h7M1312.500 885v3" stroke="#fff" stroke-width="1.300"/><path d="M1303.500 874v5h3v-5M1305 879v6h2.500" fill="none" stroke="#fff" stroke-width="1.200"/>
<path d="M1327 879h3l4 -4v13l-4 -4h-3z" fill="#fff"/>
<circle cx="1337.500" cy="885" r="4.500" fill="#d02a2a" stroke="#fff" stroke-width=".6"/><path d="M1335.500 883l4 4M1339.500 883l-4 4" stroke="#fff" stroke-width="1.300"/>
</g>
<rect x="1426.500" y="860.500" width="14" height="40" fill="#3a3e44" stroke="#7a7e84" stroke-width="1"/><rect x="1428" y="862" width="12" height="14" fill="#5a5e64" opacity=".6"/>
</svg>
<div class="abs" style="left:1226px;top:10px;font-size:11.200px;line-height:14px;color:#fff">RU</div>
<div class="abs" style="left:1352px;top:5px;width:70px;text-align:center;font-size:12px;line-height:14px;color:#fff;letter-spacing:-.2px">13:32</div>
<div class="abs" style="left:1352px;top:22px;width:70px;text-align:center;font-size:12px;line-height:14px;color:#fff;letter-spacing:-.6px">18.06.2012</div>
</div>
<svg class="abs" style="left:0;top:0;pointer-events:none" width="1440" height="900" viewBox="0 0 1440 900">
  <path fill="#ed1c24" fill-rule="evenodd" d="M559 17.500h32q24 0 24 15t-24 15h-32q-24 0 -24 -15t24 -15z M562 25.500h26q19 0 19 7t-19 7h-26q-19 0 -19 -7t19 -7z"/>
  <path fill="#ed1c24" fill-rule="evenodd" d="M1401 34.500c18 0 30 11 30 25s-12 26 -30 26s-31 -11 -31 -26s13 -25 31 -25z M1400 46.500c-13 0 -22.500 6 -22.500 15s9.500 16 22.500 16s22 -7 22 -16s-9 -15 -22 -15z"/>
</svg>
</body>
</html>
